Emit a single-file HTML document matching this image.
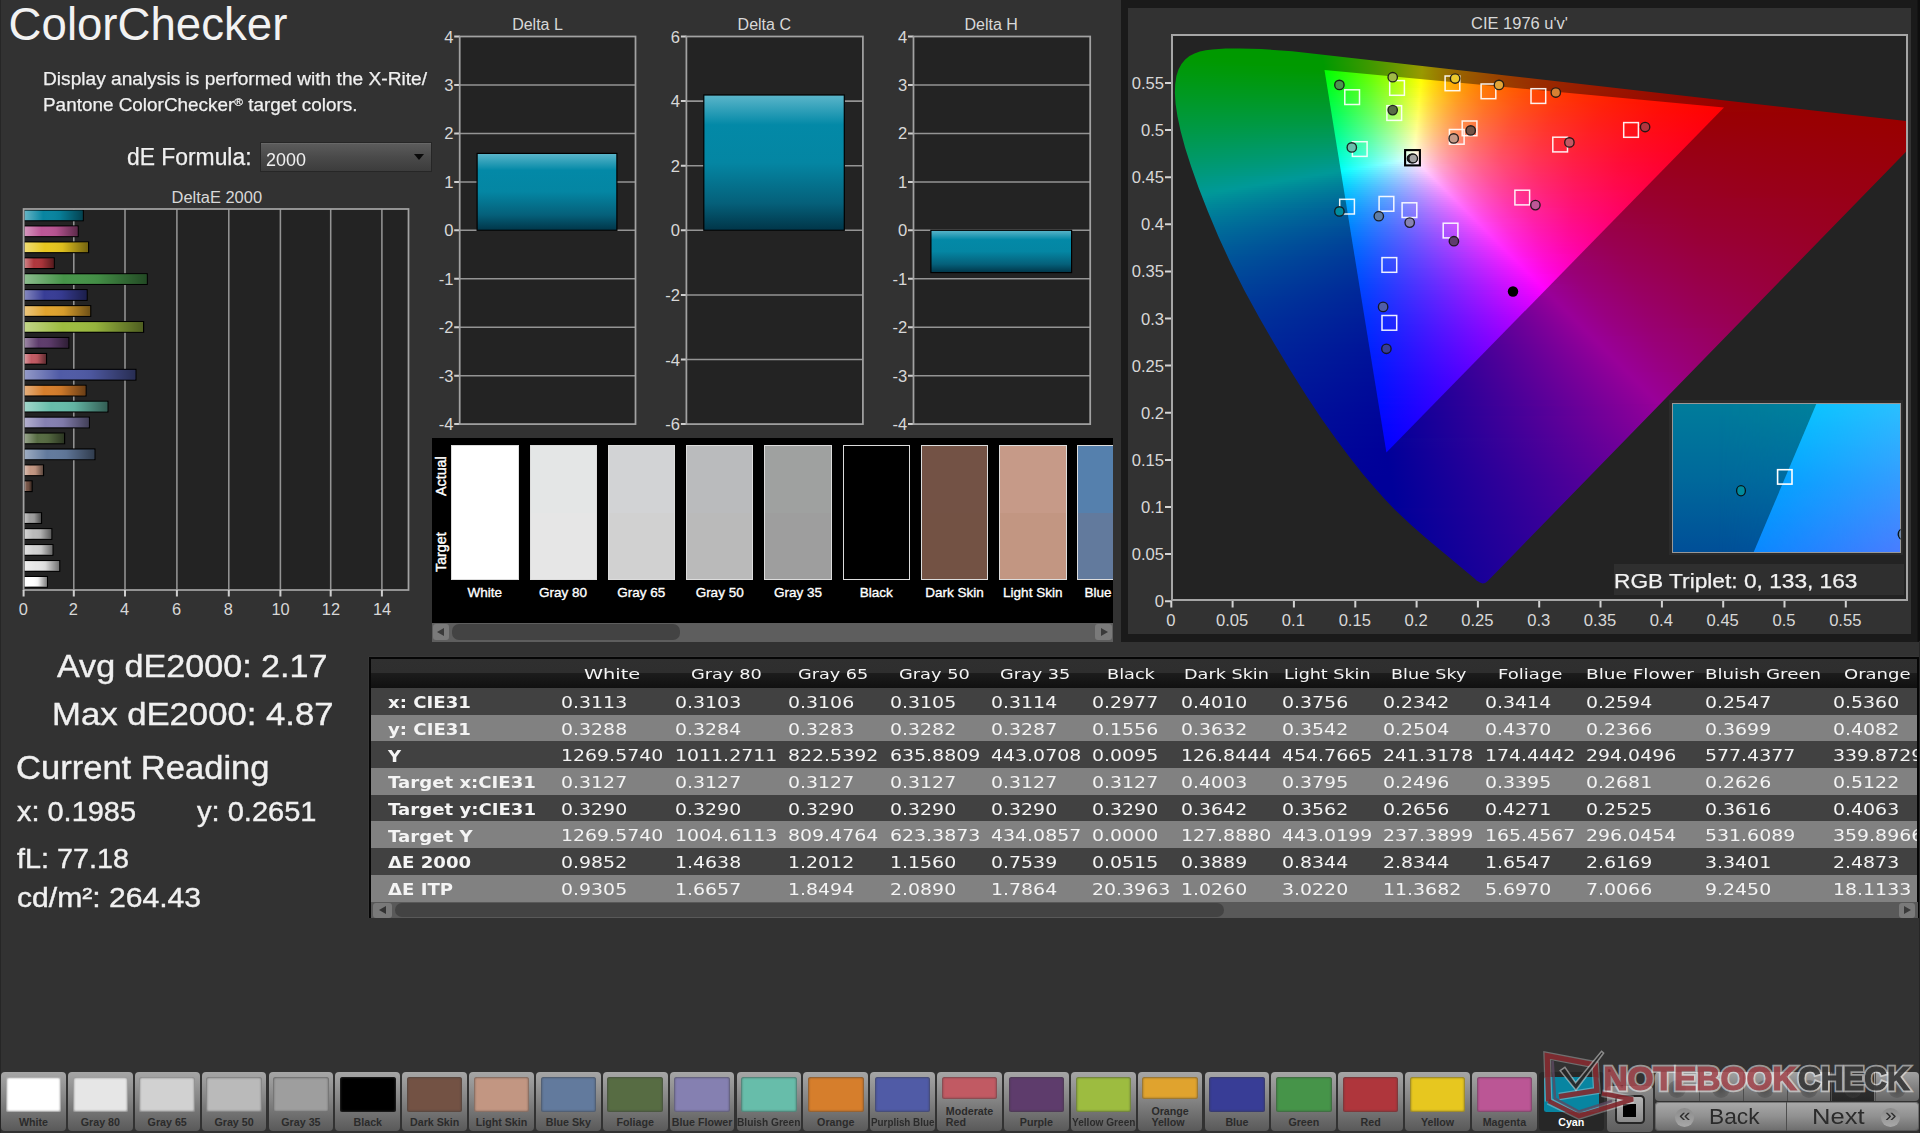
<!DOCTYPE html><html><head><meta charset="utf-8"><title>ColorChecker</title><style>

html,body{margin:0;padding:0;background:#323232;}
body{width:1920px;height:1133px;overflow:hidden;position:relative;font-family:"Liberation Sans",Arial,sans-serif;}
#app{position:absolute;left:0;top:0;width:1920px;height:1133px;overflow:hidden;background:#323232;}
.a{position:absolute;}
.t{position:absolute;white-space:nowrap;transform-origin:0 50%;}
#ov{position:absolute;left:0;top:0;}
.cl{position:absolute;left:0;top:0;width:734px;height:564px;}
.cl i{display:block;height:2px;}
#cie{position:absolute;left:1173.1px;top:36px;width:733.2px;height:563px;overflow:hidden;background:#232323;}
svg text{font-family:"Liberation Sans",Arial,sans-serif;}
.sw{position:absolute;top:445px;width:65.4px;height:133px;border:1px solid #dcdcdc;}
.sw b{display:block;height:67px;}
.sw u{display:block;height:66px;}
.row{position:absolute;left:371px;width:1546px;height:26.7px;overflow:hidden;}
.btn{position:absolute;top:1072px;width:64.8px;height:59px;border-radius:4px;background:linear-gradient(#a6a6a6,#828282 50%,#595959);}
.btn s{position:absolute;left:4.7px;top:4.8px;width:55.5px;height:35.2px;border-radius:2.5px;box-shadow:inset 0 0 2px 1px rgba(60,60,60,.55);}
.bl{position:absolute;white-space:nowrap;transform-origin:50% 50%;text-align:center;font-size:10.5px;line-height:11px;color:#2e2e2e;text-shadow:0 1px 0 rgba(255,255,255,.25);}

</style></head><body><div id="app">
<div class="a" style="left:0;top:0;width:1px;height:1133px;background:#262626"></div>
<span class="t" style="left:8.60px;top:2.40px;font-size:45.60px;line-height:45.60px;color:#f2f2f2;">ColorChecker</span>
<span class="t" style="left:43.30px;top:69.12px;font-size:19.00px;line-height:19.00px;color:#f0f0f0;transform:scaleX(1.0073);-webkit-text-stroke:.25px #f0f0f0;">Display analysis is performed with the X-Rite/</span>
<span class="t" style="left:43.30px;top:95.22px;font-size:19.00px;line-height:19.00px;color:#f0f0f0;transform:scaleX(0.9952);-webkit-text-stroke:.25px #f0f0f0;">Pantone ColorChecker<span style="font-size:.62em;vertical-align:.42em;line-height:0">®</span> target colors.</span>
<span class="t" style="left:127.10px;top:145.93px;font-size:23.00px;line-height:23.00px;color:#f0f0f0;transform:scaleX(0.9939);-webkit-text-stroke:.25px #f0f0f0;">dE Formula:</span>
<div class="a" style="left:260px;top:142px;width:169.5px;height:27.5px;border:1px solid #262626;background:linear-gradient(#5c5c5c,#4a4a4a 50%,#3c3c3c);box-shadow:inset 0 1px 0 rgba(255,255,255,.08)"></div>
<span class="t" style="left:266.00px;top:152.22px;font-size:17.70px;line-height:17.70px;color:#f0f0f0;transform:scaleX(1.0158);">2000</span>
<div class="a" style="left:413.5px;top:153.5px;width:0;height:0;border-left:5.5px solid transparent;border-right:5.5px solid transparent;border-top:6px solid #0a0a0a"></div>
<span class="t" style="left:56.50px;top:651.00px;font-size:31.30px;line-height:31.30px;color:#f0f0f0;transform:scaleX(1.0894);-webkit-text-stroke:.4px #f0f0f0;">Avg dE2000: 2.17</span>
<span class="t" style="left:51.80px;top:698.50px;font-size:31.30px;line-height:31.30px;color:#f0f0f0;transform:scaleX(1.1080);-webkit-text-stroke:.4px #f0f0f0;">Max dE2000: 4.87</span>
<span class="t" style="left:15.50px;top:751.27px;font-size:33.00px;line-height:33.00px;color:#f0f0f0;transform:scaleX(1.0469);-webkit-text-stroke:.4px #f0f0f0;">Current Reading</span>
<span class="t" style="left:16.50px;top:797.50px;font-size:28.00px;line-height:28.00px;color:#f0f0f0;transform:scaleX(1.0330);-webkit-text-stroke:.4px #f0f0f0;">x: 0.1985</span>
<span class="t" style="left:196.50px;top:797.50px;font-size:28.00px;line-height:28.00px;color:#f0f0f0;transform:scaleX(1.0373);-webkit-text-stroke:.4px #f0f0f0;">y: 0.2651</span>
<span class="t" style="left:16.50px;top:844.80px;font-size:28.00px;line-height:28.00px;color:#f0f0f0;transform:scaleX(1.0277);-webkit-text-stroke:.4px #f0f0f0;">fL: 77.18</span>
<span class="t" style="left:16.50px;top:883.90px;font-size:28.00px;line-height:28.00px;color:#f0f0f0;transform:scaleX(1.0748);-webkit-text-stroke:.4px #f0f0f0;">cd/m²: 264.43</span>
<div class="a" style="left:432px;top:438px;width:681px;height:203.5px;background:#000;overflow:hidden">
<div class="sw" style="left:19.2px;top:7.3px"><b style="background:#ffffff"></b><u style="background:#ffffff"></u></div>
<span class="t" style="left:35.55px;top:148.17px;font-size:13.50px;line-height:13.50px;color:#fff;-webkit-text-stroke:.35px #fff;">White</span>
<div class="sw" style="left:97.5px;top:7.3px"><b style="background:#e4e6e6"></b><u style="background:#e6e6e6"></u></div>
<span class="t" style="left:107.07px;top:148.17px;font-size:13.50px;line-height:13.50px;color:#fff;-webkit-text-stroke:.35px #fff;">Gray 80</span>
<div class="sw" style="left:175.8px;top:7.3px"><b style="background:#d2d3d5"></b><u style="background:#d1d1d1"></u></div>
<span class="t" style="left:185.35px;top:148.17px;font-size:13.50px;line-height:13.50px;color:#fff;-webkit-text-stroke:.35px #fff;">Gray 65</span>
<div class="sw" style="left:254.0px;top:7.3px"><b style="background:#babbbd"></b><u style="background:#bababa"></u></div>
<span class="t" style="left:263.63px;top:148.17px;font-size:13.50px;line-height:13.50px;color:#fff;-webkit-text-stroke:.35px #fff;">Gray 50</span>
<div class="sw" style="left:332.3px;top:7.3px"><b style="background:#9fa1a0"></b><u style="background:#9e9e9e"></u></div>
<span class="t" style="left:341.91px;top:148.17px;font-size:13.50px;line-height:13.50px;color:#fff;-webkit-text-stroke:.35px #fff;">Gray 35</span>
<div class="sw" style="left:410.6px;top:7.3px"><b style="background:#000000"></b><u style="background:#000000"></u></div>
<span class="t" style="left:427.69px;top:148.17px;font-size:13.50px;line-height:13.50px;color:#fff;-webkit-text-stroke:.35px #fff;">Black</span>
<div class="sw" style="left:488.9px;top:7.3px"><b style="background:#735245"></b><u style="background:#735244"></u></div>
<span class="t" style="left:493.22px;top:148.17px;font-size:13.50px;line-height:13.50px;color:#fff;-webkit-text-stroke:.35px #fff;">Dark Skin</span>
<div class="sw" style="left:567.2px;top:7.3px"><b style="background:#c69a88"></b><u style="background:#c29682"></u></div>
<span class="t" style="left:571.12px;top:148.17px;font-size:13.50px;line-height:13.50px;color:#fff;-webkit-text-stroke:.35px #fff;">Light Skin</span>
<div class="sw" style="left:645.4px;top:7.3px"><b style="background:#5580ad"></b><u style="background:#627a9d"></u></div>
<span class="t" style="left:652.40px;top:148.17px;font-size:13.50px;line-height:13.50px;color:#fff;-webkit-text-stroke:.35px #fff;">Blue Sky</span>
<span class="t" style="left:3.2px;top:58.4px;font-size:14.3px;line-height:13px;-webkit-text-stroke:.4px #fff;color:#fff;transform-origin:0 0;transform:rotate(-90deg)">Actual</span>
<span class="t" style="left:3.2px;top:133.6px;font-size:14.3px;line-height:13px;-webkit-text-stroke:.4px #fff;color:#fff;transform-origin:0 0;transform:rotate(-90deg)">Target</span>
<div class="a" style="left:0;top:184.5px;width:681px;height:19px;background:#5e5e5e"></div>
<div class="a" style="left:1px;top:186.3px;width:16px;height:15.5px;border-radius:3px;background:#7a7a7a"></div>
<div class="a" style="left:663px;top:186.3px;width:16.5px;height:15.5px;border-radius:3px;background:#7a7a7a"></div>
<div class="a" style="left:5px;top:189.5px;width:0;height:0;border-top:4.5px solid transparent;border-bottom:4.5px solid transparent;border-right:7px solid #3a3a3a"></div>
<div class="a" style="left:668.5px;top:189.5px;width:0;height:0;border-top:4.5px solid transparent;border-bottom:4.5px solid transparent;border-left:7px solid #3a3a3a"></div>
<div class="a" style="left:20.3px;top:186.3px;width:228px;height:15.5px;border-radius:7px;background:#434343"></div>
</div>
<div class="a" style="left:1121px;top:0;width:799px;height:641.5px;background:linear-gradient(90deg,#1a1a1a 796px,#0e0e0e 797px)"></div>
<div class="a" style="left:1128px;top:8px;width:783px;height:626px;background:#323232"></div>
<div class="a" style="left:1171.1px;top:34px;width:733.2px;height:563px;border:2px solid #a6a6a6;background:#232323"></div>
<div id="cie"><div class="cl" style="clip-path:polygon(314.4px 545.2px,312.0px 547.1px,309.6px 547.4px,306.8px 546.4px,303.4px 544.5px,301.4px 542.4px,252.5px 501.8px,238.0px 489.1px,221.5px 473.4px,212.2px 463.8px,201.7px 452.1px,189.7px 438.0px,176.7px 421.5px,162.9px 403.0px,148.3px 382.4px,133.1px 359.5px,117.5px 334.7px,101.7px 308.5px,86.1px 281.6px,71.2px 254.3px,57.6px 227.3px,45.5px 200.9px,34.9px 175.7px,25.7px 152.3px,18.1px 130.8px,12.0px 111.7px,7.5px 95.0px,4.4px 80.4px,2.5px 67.9px,1.8px 57.2px,2.1px 48.0px,3.3px 40.1px,5.4px 33.5px,8.4px 28.0px,12.1px 23.6px,16.4px 20.1px,21.4px 17.4px,26.8px 15.5px,32.8px 14.2px,39.1px 13.4px,52.6px 12.5px,66.5px 12.4px,87.8px 13.0px,119.0px 15.2px,761.5px 88.2px,761.8px 86.1px)">
<i style="margin-top:12px;background:linear-gradient(90deg,#090 32px,#090 104px)"></i>
<i style="background:linear-gradient(90deg,#090 23px,#090 128px)"></i>
<i style="background:linear-gradient(90deg,#090 18px,#090 146px)"></i>
<i style="background:linear-gradient(90deg,#090 14px,#090 149px,#129900 164px)"></i>
<i style="background:linear-gradient(90deg,#090 12px,#090 149px,#289900 181px)"></i>
<i style="background:linear-gradient(90deg,#009902 9px,#090 149px,#1c9900 172px,#429900 199px)"></i>
<i style="background:linear-gradient(90deg,#009904 8px,#090 55px,#090 150px,#2d9900 185px,#5e9900 217px)"></i>
<i style="background:linear-gradient(90deg,#009905 6px,#090 76px,#090 150px,#3a9900 194px,#7b9900 234px)"></i>
<i style="background:linear-gradient(90deg,#009907 5px,#090 97px,#090 151px,#419900 199px,#6b9900 225px,#989900 249px,#999400 252px)"></i>
<i style="background:linear-gradient(90deg,#009909 4px,#090 151px,#239900 178px,#479900 203px,#6f9900 227px,#989900 249px,#997800 269px)"></i>
<i style="background:linear-gradient(90deg,#00990b 3px,#090 151px,#219900 177px,#479900 203px,#6f9900 227px,#990 249px,#997b00 267px,#996200 287px)"></i>
<i style="background:linear-gradient(90deg,#00990d 2px,#009901 151px,#1e9900 175px,#459900 202px,#6d9900 226px,#990 249px,#998300 261px,#997100 274px,#995100 305px)"></i>
<i style="background:linear-gradient(90deg,#00990e 2px,#009903 152px,#229901 178px,#479900 203px,#6e9900 226px,#990 249px,#998000 263px,#996900 280px,#950 300px,#940 322px)"></i>
<i style="background:linear-gradient(90deg,#009910 1px,#009906 152px,#229903 178px,#479900 203px,#6e9900 226px,#989900 248px,#997900 267px,#996100 287px,#994c00 311px,#993900 340px)"></i>
<i style="background:linear-gradient(90deg,#009912 1px,#019908 153px,#239905 179px,#479903 203px,#6e9900 226px,#989900 248px,#997600 269px,#995a00 293px,#994300 322px,#993000 357px)"></i>
<i style="background:linear-gradient(90deg,#009914 0px,#00990a 153px,#239908 179px,#479905 203px,#6e9903 226px,#989900 248px,#997300 271px,#950 299px,#993c00 333px,#992900 375px)"></i>
<i style="background:linear-gradient(90deg,#009915 0px,#00990d 153px,#21990a 178px,#479908 203px,#6e9906 226px,#999903 248px,#998301 260px,#997000 273px,#995000 304px,#993600 343px,#920 393px)"></i>
<i style="background:linear-gradient(90deg,#009917 0px,#01990f 154px,#24990d 180px,#48990b 204px,#6e9908 226px,#999906 248px,#998104 261px,#996d02 275px,#995b00 291px,#994c00 309px,#993100 353px,#991c00 410px)"></i>
<i style="background:linear-gradient(90deg,#009919 0px,#091 154px,#22990f 179px,#46990d 203px,#6e990b 226px,#989909 247px,#997d06 263px,#996a04 277px,#995701 295px,#994700 315px,#992c00 364px,#991700 428px)"></i>
<i style="background:linear-gradient(90deg,#00991b 0px,#009914 154px,#229912 179px,#469910 203px,#6e990e 226px,#98990c 247px,#997d08 263px,#996706 279px,#995403 298px,#994401 319px,#992800 373px,#991300 445px)"></i>
<i style="background:linear-gradient(90deg,#00991d 0px,#009916 154px,#209915 178px,#469913 203px,#6f9911 226px,#98990f 247px,#997d0b 263px,#996608 280px,#995205 300px,#994002 324px,#993100 351px,#992400 383px,#990f00 463px)"></i>
<i style="background:linear-gradient(90deg,#00991f 0px,#009919 155px,#239917 180px,#489916 204px,#6f9914 226px,#999912 247px,#997c0e 263px,#99640a 281px,#994f06 303px,#993d04 328px,#992e01 357px,#992100 392px,#990c00 481px)"></i>
<i style="background:linear-gradient(90deg,#009920 0px,#00991b 155px,#22991a 180px,#489919 204px,#6f9917 226px,#999916 247px,#997a10 264px,#99610c 283px,#994c08 306px,#993a05 333px,#992a02 365px,#991d00 402px,#990900 498px)"></i>
<i style="background:linear-gradient(90deg,#092 0px,#00991e 155px,#1f991d 178px,#46991b 203px,#6d991a 225px,#999919 247px,#997a13 264px,#99600e 284px,#994a0a 308px,#993706 337px,#992703 371px,#991a00 411px,#990600 516px)"></i>
<i style="background:linear-gradient(90deg,#009924 0px,#009920 156px,#22991f 180px,#46991e 203px,#6b991d 224px,#99981c 247px,#997815 265px,#995d10 286px,#99460b 312px,#993407 342px,#992404 378px,#991701 421px,#990300 534px)"></i>
<i style="background:linear-gradient(90deg,#009926 0px,#009923 156px,#219922 180px,#469921 203px,#699921 223px,#99981f 247px,#997718 265px,#995c12 287px,#99450c 314px,#993208 346px,#992204 384px,#991501 430px,#990100 551px)"></i>
<i style="background:linear-gradient(90deg,#009928 0px,#009925 156px,#1e9925 178px,#449924 202px,#689924 222px,#999722 247px,#99751a 266px,#995913 289px,#99420e 317px,#992f09 351px,#991f05 393px,#991102 444px,#990500 513px,#900 569px)"></i>
<i style="background:linear-gradient(90deg,#00992a 0px,#009928 157px,#229928 181px,#479927 204px,#6f9927 226px,#999926 246px,#99751d 266px,#995815 290px,#99400f 319px,#992d0a 355px,#991c05 402px,#990e02 459px,#900 555px,#900 586px)"></i>
<i style="background:linear-gradient(90deg,#00992c 0px,#00992b 157px,#22992b 181px,#47992a 204px,#6e992a 225px,#99992a 246px,#997520 266px,#995717 291px,#993e10 322px,#992a0b 360px,#991906 411px,#990b02 476px,#900 553px,#900 604px)"></i>
<i style="background:linear-gradient(90deg,#00992e 0px,#00992d 157px,#1f992d 179px,#45992d 203px,#6c992d 224px,#99982d 246px,#997322 267px,#995419 293px,#993c12 325px,#99280c 365px,#991606 421px,#990802 493px,#900 551px,#900 622px)"></i>
<i style="background:linear-gradient(90deg,#009930 1px,#009930 158px,#219930 181px,#459930 203px,#6a9931 223px,#999830 246px,#99842a 256px,#997225 267px,#99531b 294px,#993a13 327px,#99260c 369px,#991307 431px,#990502 510px,#990001 550px,#900 639px)"></i>
<i style="background:linear-gradient(90deg,#009932 1px,#093 158px,#219933 181px,#459934 203px,#689934 222px,#999734 246px,#99832d 256px,#997027 268px,#99511c 296px,#993714 331px,#99230d 374px,#991107 441px,#990202 528px,#900 657px)"></i>
<i style="background:linear-gradient(90deg,#009934 1px,#009936 158px,#1f9936 180px,#479937 204px,#6e9937 225px,#999938 245px,#998330 256px,#99702a 268px,#99501e 296px,#993615 332px,#99220e 377px,#990f07 449px,#990002 545px,#900 674px)"></i>
<i style="background:linear-gradient(90deg,#009936 2px,#009939 159px,#229939 182px,#47993a 204px,#6e993b 225px,#99993c 245px,#998333 256px,#996f2c 268px,#995e26 282px,#994e20 298px,#993416 335px,#99200f 382px,#990e08 452px,#990003 543px,#900 692px)"></i>
<i style="background:linear-gradient(90deg,#009938 2px,#00993c 159px,#22993c 182px,#47993d 204px,#6c993e 224px,#99983f 245px,#998236 256px,#996d2e 269px,#994d22 299px,#993318 337px,#991e10 386px,#990d09 453px,#990004 541px,#900 710px)"></i>
<i style="background:linear-gradient(90deg,#00993a 2px,#00993e 159px,#1e993f 180px,#459941 203px,#6b9942 223px,#999843 245px,#99823a 256px,#996d31 269px,#995b2a 284px,#994b23 300px,#993119 339px,#991d10 390px,#990d0a 455px,#990005 539px,#900 727px)"></i>
<i style="background:linear-gradient(90deg,#00993c 3px,#009941 160px,#239943 183px,#469944 204px,#699945 222px,#999746 245px,#99813d 256px,#996d34 269px,#995a2c 284px,#994b25 300px,#99301a 340px,#991c11 392px,#990c0b 456px,#990006 538px,#900 734px)"></i>
<i style="background:linear-gradient(90deg,#00993e 3px,#094 160px,#219946 182px,#459947 203px,#99974a 245px,#998140 256px,#996c37 269px,#995a2e 284px,#994a28 300px,#99301c 340px,#991b13 392px,#990c0c 455px,#990006 536px,#900 734px)"></i>
<i style="background:linear-gradient(90deg,#009940 4px,#009947 160px,#219949 182px,#46994b 204px,#6d994d 224px,#99994f 244px,#998244 255px,#996d3a 268px,#995a31 283px,#994b2a 299px,#99301e 339px,#991c14 390px,#990c0d 453px,#990007 534px,#900 734px)"></i>
<i style="background:linear-gradient(90deg,#009942 4px,#01994a 161px,#24994c 184px,#48994e 205px,#6d9950 224px,#999852 244px,#998247 255px,#996d3d 268px,#995a34 283px,#994a2c 299px,#99301f 339px,#991b15 390px,#990c0e 453px,#990008 532px,#990001 734px)"></i>
<i style="background:linear-gradient(90deg,#094 4px,#00994e 161px,#229950 183px,#469952 204px,#6b9954 223px,#999856 244px,#99814a 255px,#996c40 268px,#995936 283px,#994a2e 299px,#992f21 339px,#991b17 390px,#990c0f 452px,#990009 530px,#990001 734px)"></i>
<i style="background:linear-gradient(90deg,#009946 5px,#009951 161px,#209953 182px,#495 203px,#699957 222px,#99985a 244px,#99814e 255px,#996c43 268px,#995939 283px,#994931 299px,#992f23 339px,#991b18 390px,#990c10 451px,#99000a 528px,#990002 734px)"></i>
<i style="background:linear-gradient(90deg,#009948 5px,#019954 162px,#239956 184px,#469959 204px,#99975e 244px,#998051 255px,#996b46 268px,#99583b 283px,#994933 299px,#992f24 339px,#991a19 390px,#990c11 450px,#99000b 526px,#990002 734px)"></i>
<i style="background:linear-gradient(90deg,#00994b 6px,#009957 162px,#22995a 184px,#48995d 205px,#709960 225px,#999963 243px,#998155 254px,#996c49 267px,#995a3f 281px,#994a36 297px,#992f27 337px,#991b1b 388px,#990c12 448px,#99000c 524px,#990003 734px)"></i>
<i style="background:linear-gradient(90deg,#00994d 6px,#00995a 162px,#20995d 183px,#469960 204px,#6c9963 223px,#999967 243px,#998159 254px,#996c4c 267px,#995a42 281px,#994a38 297px,#992f28 337px,#991a1c 388px,#990c14 447px,#99000d 522px,#990003 734px)"></i>
<i style="background:linear-gradient(90deg,#00994f 7px,#01995e 163px,#239961 185px,#479964 205px,#6c9967 223px,#99986b 243px,#99815c 254px,#996b4f 267px,#995944 281px,#99493a 297px,#992e2a 337px,#991a1d 388px,#990c15 446px,#99000e 520px,#990004 734px)"></i>
<i style="background:linear-gradient(90deg,#009951 7px,#009961 163px,#219964 184px,#459968 204px,#6a996b 222px,#99986f 243px,#998060 254px,#996b52 267px,#995947 281px,#99493d 297px,#992e2c 337px,#991a1f 388px,#990b16 446px,#99000f 518px,#990004 734px)"></i>
<i style="background:linear-gradient(90deg,#009954 8px,#009964 163px,#1f9967 183px,#43996b 203px,#68996f 221px,#999773 243px,#998063 254px,#996a55 267px,#995849 281px,#99483f 297px,#992e2d 337px,#991920 388px,#990b17 445px,#990010 516px,#990005 734px)"></i>
<i style="background:linear-gradient(90deg,#009956 9px,#009968 163px,#1c996b 181px,#41996f 202px,#6c9973 223px,#999978 242px,#999777 243px,#997f67 254px,#996a58 267px,#99584c 281px,#994841 297px,#992d2f 337px,#991921 388px,#990b18 444px,#901 514px,#990005 734px)"></i>
<i style="background:linear-gradient(90deg,#009958 9px,#00996b 164px,#22996f 185px,#479973 205px,#6f9978 224px,#99997d 242px,#99806c 253px,#996c5d 265px,#995950 279px,#994844 296px,#992e32 335px,#991923 386px,#990b19 442px,#990012 512px,#990006 734px)"></i>
<i style="background:linear-gradient(90deg,#00995b 10px,#00996f 164px,#209973 184px,#459977 204px,#6a997c 222px,#999881 242px,#99806f 253px,#996b60 265px,#995953 279px,#994847 296px,#992d33 335px,#991925 386px,#990b1b 441px,#990013 510px,#990006 734px)"></i>
<i style="background:linear-gradient(90deg,#00995d 10px,#009972 164px,#1e9976 183px,#45997b 204px,#6a9980 222px,#999885 242px,#997f73 253px,#996b63 265px,#995856 279px,#994749 296px,#992d35 335px,#991826 386px,#990b1c 440px,#990014 508px,#990007 734px)"></i>
<i style="background:linear-gradient(90deg,#009960 11px,#00996a 95px,#009976 165px,#21997a 185px,#45997f 204px,#689984 221px,#999789 242px,#997f76 253px,#996a67 265px,#995858 279px,#99484c 295px,#992c37 335px,#991827 386px,#990b1d 440px,#990015 506px,#990007 734px)"></i>
<i style="background:linear-gradient(90deg,#009962 11px,#00996d 95px,#009979 165px,#1f997e 184px,#459983 204px,#6d9989 223px,#99998f 241px,#99978d 242px,#997e7a 253px,#996a6a 265px,#99575b 279px,#99474e 295px,#992d39 334px,#991829 386px,#990b1e 439px,#990016 504px,#990008 733px)"></i>
<i style="background:linear-gradient(90deg,#009964 12px,#009970 96px,#00997d 165px,#1f9982 184px,#469988 205px,#6d998d 223px,#999994 241px,#99807f 252px,#996b6e 264px,#99585f 278px,#994851 294px,#992d3b 333px,#99182a 384px,#990b20 437px,#990017 502px,#990008 731px)"></i>
<i style="background:linear-gradient(90deg,#009967 13px,#009973 97px,#009981 166px,#229986 186px,#46998c 205px,#6d9992 223px,#999898 241px,#997f83 252px,#996a72 264px,#995862 278px,#994754 294px,#992c3d 333px,#99182c 383px,#990b21 436px,#990018 501px,#990009 729px)"></i>
<i style="background:linear-gradient(90deg,#009969 13px,#009976 97px,#009985 166px,#3e998f 201px,#7c9999 229px,#999398 243px,#997b84 254px,#996772 266px,#995563 280px,#994555 296px,#992b3e 335px,#99172d 386px,#990a22 437px,#990019 499px,#990010 598px,#990009 727px)"></i>
<i style="background:linear-gradient(90deg,#00996c 14px,#009979 97px,#098 166px,#2b9990 191px,#609999 217px,#998d98 245px,#997784 256px,#996373 268px,#995263 282px,#994255 299px,#99293f 338px,#99152d 389px,#990a23 438px,#99001a 497px,#901 596px,#99000a 725px)"></i>
<i style="background:linear-gradient(90deg,#00996f 15px,#00997c 98px,#00998d 167px,#239993 187px,#469999 205px,#998898 247px,#997384 258px,#995f72 271px,#994056 301px,#99273f 341px,#99142e 392px,#99001b 495px,#990012 594px,#99000b 723px)"></i>
<i style="background:linear-gradient(90deg,#009971 15px,#00997f 98px,#009990 167px,#2e9999 193px,#998398 249px,#996f85 260px,#995c73 273px,#993d56 304px,#99253f 344px,#99132e 395px,#99001c 493px,#990013 592px,#99000b 722px)"></i>
<i style="background:linear-gradient(90deg,#009974 16px,#009983 99px,#009994 167px,#179999 181px,#548d99 215px,#997f98 251px,#996b85 262px,#995973 275px,#993b57 306px,#992440 346px,#99122f 397px,#99001d 491px,#990013 590px,#99000c 720px)"></i>
<i style="background:linear-gradient(90deg,#097 17px,#009986 100px,#099 168px,#498b99 210px,#997a98 253px,#996786 264px,#995674 277px,#993957 308px,#992241 348px,#991130 400px,#99001f 489px,#990014 588px,#99000c 718px)"></i>
<i style="background:linear-gradient(90deg,#009979 17px,#098 93px,#099 157px,#009599 168px,#478799 210px,#997699 255px,#996284 267px,#995273 280px,#993658 311px,#992141 351px,#991030 403px,#990020 487px,#990015 586px,#99000d 716px)"></i>
<i style="background:linear-gradient(90deg,#00997c 18px,#009989 86px,#099 145px,#009299 168px,#458399 210px,#997299 257px,#995f85 269px,#994f74 282px,#993458 313px,#991f42 354px,#990f31 406px,#990021 485px,#990016 584px,#99000e 714px)"></i>
<i style="background:linear-gradient(90deg,#00997f 19px,#099 133px,#008e99 169px,#487f99 213px,#996e99 259px,#995b85 271px,#994c75 284px,#993258 316px,#991e43 356px,#990e31 408px,#902 483px,#990017 582px,#99000e 712px)"></i>
<i style="background:linear-gradient(90deg,#009982 20px,#099 121px,#008a99 169px,#487b99 214px,#996a99 261px,#995885 273px,#994a75 286px,#993059 318px,#991c43 359px,#990d32 411px,#990024 481px,#990018 580px,#99000f 710px)"></i>
<i style="background:linear-gradient(90deg,#009984 20px,#099 109px,#008799 169px,#467899 214px,#969 263px,#994978 286px,#99325e 314px,#992049 350px,#991138 394px,#990025 479px,#990019 578px,#990010 708px)"></i>
<i style="background:linear-gradient(90deg,#009987 21px,#099 97px,#008399 170px,#497499 217px,#996299 265px,#994778 288px,#99305e 317px,#991e49 352px,#991039 396px,#990026 477px,#99001a 576px,#990010 706px)"></i>
<i style="background:linear-gradient(90deg,#00998a 22px,#099 85px,#008099 170px,#497099 218px,#995f99 267px,#994479 290px,#992e5f 319px,#991d4a 354px,#990f39 398px,#990027 475px,#99001b 574px,#901 704px)"></i>
<i style="background:linear-gradient(90deg,#00998d 22px,#099 73px,#007d99 170px,#456e99 217px,#995b99 269px,#994279 292px,#992d5f 321px,#991c4b 356px,#990e3a 399px,#990029 473px,#99001c 571px,#901 702px)"></i>
<i style="background:linear-gradient(90deg,#009990 23px,#099 61px,#007a99 171px,#4a6a99 221px,#995899 271px,#993f7a 294px,#992b60 323px,#991b4c 358px,#990d3b 401px,#99002a 471px,#99001c 569px,#990012 700px)"></i>
<i style="background:linear-gradient(90deg,#009993 24px,#099 49px,#079 171px,#496799 222px,#959 273px,#993d7a 296px,#992961 325px,#991a4c 360px,#990d3c 403px,#99002c 469px,#99001d 567px,#990013 698px)"></i>
<i style="background:linear-gradient(90deg,#009996 25px,#009699 48px,#007499 171px,#466499 221px,#995299 275px,#993b7b 298px,#992861 327px,#99184d 362px,#990c3c 405px,#99002d 467px,#99001e 565px,#990013 696px)"></i>
<i style="background:linear-gradient(90deg,#099 25px,#007199 172px,#4a6199 225px,#994f99 277px,#99397b 300px,#992662 329px,#99174e 364px,#990b3d 406px,#99002e 466px,#99001f 564px,#990014 694px)"></i>
<i style="background:linear-gradient(90deg,#009699 26px,#006f99 172px,#4a5e99 226px,#994c99 279px,#99377b 302px,#992562 331px,#99164e 366px,#990a3e 408px,#990030 464px,#990020 562px,#990015 692px)"></i>
<i style="background:linear-gradient(90deg,#009399 27px,#006c99 172px,#475c99 225px,#994999 281px,#99357c 304px,#992363 333px,#99154f 368px,#990a3f 410px,#990031 461px,#990026 523px,#990016 690px)"></i>
<i style="background:linear-gradient(90deg,#009099 28px,#016a99 173px,#4a5999 228px,#994799 283px,#99337c 306px,#992264 335px,#991450 369px,#990940 411px,#903 459px,#990027 523px,#990016 688px)"></i>
<i style="background:linear-gradient(90deg,#008d99 29px,#006799 173px,#495699 229px,#949 285px,#99307c 309px,#992064 337px,#991351 371px,#990840 413px,#990034 458px,#990028 524px,#990017 686px)"></i>
<i style="background:linear-gradient(90deg,#008a99 29px,#006599 173px,#485499 229px,#994199 287px,#992e7c 311px,#991f65 339px,#991251 373px,#990741 415px,#990036 456px,#990028 525px,#990018 685px)"></i>
<i style="background:linear-gradient(90deg,#089 30px,#016399 174px,#4a5199 232px,#993f99 289px,#992d7c 313px,#991e65 341px,#991152 375px,#990742 416px,#990037 454px,#990029 525px,#990018 683px)"></i>
<i style="background:linear-gradient(90deg,#008599 31px,#006099 174px,#4a4f99 233px,#993d99 291px,#992b7d 315px,#991c66 343px,#991052 377px,#990642 418px,#990039 452px,#99002a 526px,#990019 681px)"></i>
<i style="background:linear-gradient(90deg,#008299 32px,#005e99 174px,#494d99 233px,#993a99 293px,#99297d 317px,#991b66 345px,#990f53 379px,#990643 419px,#99003a 450px,#99002b 526px,#99001a 679px)"></i>
<i style="background:linear-gradient(90deg,#008099 32px,#015c99 175px,#4b4a99 236px,#993899 295px,#99277d 319px,#991a67 347px,#990e54 381px,#990544 421px,#99003c 448px,#99002c 526px,#99001b 677px)"></i>
<i style="background:linear-gradient(90deg,#007e99 33px,#005a99 175px,#4b4899 237px,#993699 297px,#99267e 321px,#991967 349px,#990e55 382px,#990445 422px,#99003e 446px,#99002c 526px,#99001b 675px)"></i>
<i style="background:linear-gradient(90deg,#007b99 34px,#005899 175px,#494799 237px,#993499 299px,#99257f 322px,#991868 350px,#990d56 383px,#990446 423px,#99003f 444px,#99002d 526px,#99001c 673px)"></i>
<i style="background:linear-gradient(90deg,#007999 35px,#015699 176px,#4a4499 239px,#993299 301px,#99237f 324px,#991669 352px,#990c56 385px,#990346 425px,#990041 442px,#99002e 527px,#99001d 671px)"></i>
<i style="background:linear-gradient(90deg,#079 36px,#005499 176px,#4a4399 240px,#993099 303px,#99217f 326px,#991569 354px,#990b57 387px,#990247 426px,#990043 440px,#99002f 527px,#99001e 669px)"></i>
<i style="background:linear-gradient(90deg,#007499 37px,#005399 176px,#4a4199 241px,#992e99 305px,#992080 328px,#99146a 356px,#990a57 389px,#990248 428px,#99003b 474px,#990030 528px,#99001e 667px)"></i>
<i style="background:linear-gradient(90deg,#007299 38px,#015199 177px,#4b3f99 243px,#992c99 307px,#991e80 330px,#99136a 358px,#990958 391px,#990149 429px,#990030 528px,#99001f 665px)"></i>
<i style="background:linear-gradient(90deg,#007099 38px,#004f99 177px,#4b3d99 244px,#992a99 309px,#991d80 332px,#99126b 360px,#990959 392px,#990149 430px,#990031 528px,#990020 663px)"></i>
<i style="background:linear-gradient(90deg,#006e99 39px,#004d99 177px,#493b99 244px,#992899 311px,#991c81 334px,#99116b 362px,#990859 394px,#99004a 432px,#990032 528px,#990021 661px)"></i>
<i style="background:linear-gradient(90deg,#006c99 40px,#004c99 177px,#483a99 244px,#992699 313px,#991a81 336px,#99106c 364px,#99075a 396px,#99004b 433px,#903 528px,#990021 659px)"></i>
<i style="background:linear-gradient(90deg,#006a99 41px,#004a99 178px,#4b3899 248px,#992499 315px,#991981 338px,#990f6d 365px,#99065b 397px,#99004c 434px,#990034 528px,#902 657px)"></i>
<i style="background:linear-gradient(90deg,#006899 42px,#004999 178px,#4a3699 248px,#992399 317px,#991781 340px,#990e6d 367px,#99065c 398px,#99004d 435px,#990035 528px,#990023 655px)"></i>
<i style="background:linear-gradient(90deg,#069 43px,#004799 178px,#493599 248px,#992199 319px,#991682 342px,#990d6d 369px,#99055c 400px,#99004d 437px,#990035 529px,#990024 653px)"></i>
<i style="background:linear-gradient(90deg,#006599 43px,#004599 179px,#4b3399 251px,#991f99 321px,#991582 344px,#990c6e 371px,#990054 422px,#99004e 438px,#990036 529px,#990025 651px)"></i>
<i style="background:linear-gradient(90deg,#006399 44px,#049 179px,#4a3199 252px,#991e99 323px,#991482 346px,#990b6e 373px,#990056 420px,#99004f 439px,#990037 529px,#990026 649px)"></i>
<i style="background:linear-gradient(90deg,#006199 45px,#004399 179px,#483199 251px,#991c99 325px,#991282 348px,#990a6f 374px,#990058 418px,#990050 440px,#990038 528px,#990026 647px)"></i>
<i style="background:linear-gradient(90deg,#005f99 46px,#004199 180px,#4b2e99 255px,#991b99 327px,#991183 350px,#990970 376px,#99005a 416px,#990050 442px,#990039 529px,#990027 646px)"></i>
<i style="background:linear-gradient(90deg,#005d99 47px,#004099 180px,#4b2d99 256px,#991999 329px,#991083 352px,#990870 378px,#99005d 414px,#990051 443px,#99003a 529px,#990028 644px)"></i>
<i style="background:linear-gradient(90deg,#005c99 48px,#003f99 180px,#492c99 255px,#991899 331px,#990f83 354px,#990770 380px,#99005f 412px,#990052 444px,#99003b 529px,#990029 642px)"></i>
<i style="background:linear-gradient(90deg,#005a99 49px,#003d99 181px,#4b2a99 259px,#991699 333px,#990e84 355px,#990771 381px,#990061 410px,#990053 445px,#99003b 529px,#99002a 640px)"></i>
<i style="background:linear-gradient(90deg,#005999 50px,#003c99 181px,#4a2999 259px,#991599 335px,#990d83 358px,#990672 383px,#990063 409px,#990053 446px,#99003c 529px,#99002b 638px)"></i>
<i style="background:linear-gradient(90deg,#005799 51px,#003b99 181px,#492899 259px,#991499 337px,#990c84 360px,#990572 385px,#990065 407px,#990054 447px,#99003d 529px,#99002c 636px)"></i>
<i style="background:linear-gradient(90deg,#059 52px,#003999 182px,#4b2699 262px,#991299 339px,#990a84 362px,#990472 387px,#990068 405px,#905 449px,#99003e 529px,#99002d 634px)"></i>
<i style="background:linear-gradient(90deg,#005499 53px,#003899 182px,#4b2599 263px,#919 341px,#990984 364px,#990373 389px,#99006a 403px,#905 450px,#99003f 529px,#99002d 632px)"></i>
<i style="background:linear-gradient(90deg,#005299 54px,#003799 182px,#492499 262px,#991099 343px,#990985 365px,#990273 390px,#990056 451px,#990040 529px,#99002e 630px)"></i>
<i style="background:linear-gradient(90deg,#005199 54px,#003699 183px,#4b2399 266px,#990f99 345px,#990885 367px,#990174 392px,#990057 452px,#990041 529px,#99002f 628px)"></i>
<i style="background:linear-gradient(90deg,#005099 55px,#003599 183px,#4b2199 267px,#990d99 347px,#990785 369px,#990174 394px,#990058 453px,#990042 529px,#990030 626px)"></i>
<i style="background:linear-gradient(90deg,#004e99 56px,#003499 183px,#492199 266px,#990c99 349px,#990686 371px,#990075 395px,#990059 454px,#990042 529px,#990031 624px)"></i>
<i style="background:linear-gradient(90deg,#004d99 57px,#039 184px,#4b1f99 269px,#990b99 351px,#990586 373px,#990075 397px,#990059 455px,#990043 529px,#990032 622px)"></i>
<i style="background:linear-gradient(90deg,#004b99 58px,#003299 184px,#4b1e99 270px,#990a99 353px,#990486 375px,#990076 399px,#99005a 456px,#904 528px,#903 620px)"></i>
<i style="background:linear-gradient(90deg,#004a99 59px,#003199 184px,#4a1d99 270px,#990999 355px,#99007d 389px,#990076 400px,#99005b 457px,#990045 528px,#990034 618px)"></i>
<i style="background:linear-gradient(90deg,#004999 60px,#003099 185px,#4b1c99 273px,#990899 357px,#990080 387px,#907 402px,#99005c 458px,#990046 528px,#990035 616px)"></i>
<i style="background:linear-gradient(90deg,#004799 61px,#002f99 185px,#4b1b99 274px,#990799 359px,#990084 385px,#990078 403px,#99005d 458px,#990047 527px,#990036 614px)"></i>
<i style="background:linear-gradient(90deg,#004699 62px,#002e99 185px,#4a1a99 274px,#990699 361px,#990087 383px,#990078 405px,#99005e 459px,#990048 527px,#990037 612px)"></i>
<i style="background:linear-gradient(90deg,#004599 63px,#002d99 186px,#4b1999 276px,#990599 363px,#99008a 381px,#990078 407px,#99005e 460px,#990049 527px,#990038 610px)"></i>
<i style="background:linear-gradient(90deg,#049 65px,#002c99 186px,#4b1899 277px,#990399 365px,#99008d 379px,#990079 408px,#99005f 461px,#99004a 527px,#990039 609px)"></i>
<i style="background:linear-gradient(90deg,#004299 66px,#002b99 186px,#4a1799 277px,#990299 367px,#990079 410px,#990060 462px,#99004b 527px,#99003a 607px)"></i>
<i style="background:linear-gradient(90deg,#004199 67px,#002a99 187px,#4b1699 280px,#990299 369px,#99007a 411px,#990061 463px,#99004c 527px,#99003b 605px)"></i>
<i style="background:linear-gradient(90deg,#004099 68px,#002999 187px,#4b1599 281px,#990199 371px,#99007a 413px,#990061 464px,#99004d 526px,#99003c 603px)"></i>
<i style="background:linear-gradient(90deg,#003f99 69px,#002899 187px,#4a1599 281px,#909 373px,#99007a 415px,#990062 465px,#99004e 526px,#99003d 601px)"></i>
<i style="background:linear-gradient(90deg,#003e99 70px,#002799 188px,#4b1399 283px,#909 375px,#99007b 416px,#990063 466px,#99004f 526px,#99003f 599px)"></i>
<i style="background:linear-gradient(90deg,#003d99 71px,#002699 188px,#4a1399 284px,#909 377px,#99007c 418px,#990064 466px,#990050 525px,#990040 597px)"></i>
<i style="background:linear-gradient(90deg,#003b99 72px,#002699 188px,#4a1299 285px,#8d0099 365px,#909 379px,#99007c 419px,#990065 467px,#990051 525px,#990041 595px)"></i>
<i style="background:linear-gradient(90deg,#003a99 73px,#002599 189px,#441399 278px,#890099 363px,#909 381px,#99007d 421px,#990065 468px,#990052 525px,#990042 593px)"></i>
<i style="background:linear-gradient(90deg,#003999 74px,#002499 189px,#421299 277px,#860099 361px,#909 383px,#99007d 423px,#906 469px,#990053 525px,#990043 591px)"></i>
<i style="background:linear-gradient(90deg,#003899 75px,#002399 189px,#401299 275px,#830099 359px,#909 385px,#99007e 424px,#990067 469px,#990054 524px,#904 589px)"></i>
<i style="background:linear-gradient(90deg,#003799 76px,#029 190px,#3f1299 275px,#800099 357px,#909 387px,#99007e 425px,#990068 470px,#905 523px,#990045 587px)"></i>
<i style="background:linear-gradient(90deg,#003699 77px,#029 190px,#3e1199 274px,#7d0099 355px,#909 389px,#99007f 427px,#990069 471px,#990056 523px,#990047 585px)"></i>
<i style="background:linear-gradient(90deg,#003599 78px,#002199 190px,#3b1199 272px,#7a0099 353px,#909 391px,#99007f 428px,#99006a 471px,#990057 522px,#990048 583px)"></i>
<i style="background:linear-gradient(90deg,#003499 79px,#002099 191px,#780099 352px,#909 393px,#990080 430px,#99006b 472px,#990058 522px,#990049 581px)"></i>
<i style="background:linear-gradient(90deg,#039 81px,#002099 191px,#750099 350px,#909 395px,#990080 431px,#99006b 473px,#990059 522px,#99004a 579px)"></i>
<i style="background:linear-gradient(90deg,#003299 82px,#001f99 191px,#720099 348px,#909 397px,#990080 433px,#99006c 473px,#99005b 521px,#99004c 577px)"></i>
<i style="background:linear-gradient(90deg,#003199 83px,#001e99 192px,#6f0099 346px,#909 399px,#990081 434px,#99006d 474px,#99005c 521px,#99004d 575px)"></i>
<i style="background:linear-gradient(90deg,#003099 84px,#001d99 192px,#6d0099 344px,#909 401px,#990081 436px,#99006e 475px,#99005d 520px,#99004e 573px)"></i>
<i style="background:linear-gradient(90deg,#002f99 85px,#001d99 192px,#6a0099 342px,#909 403px,#990082 437px,#99006f 475px,#99005e 520px,#99004f 571px)"></i>
<i style="background:linear-gradient(90deg,#002f99 86px,#001c99 193px,#670099 340px,#909 405px,#990082 439px,#990070 476px,#99005f 520px,#990050 570px)"></i>
<i style="background:linear-gradient(90deg,#002e99 87px,#001b99 193px,#650099 338px,#909 407px,#990083 440px,#990070 477px,#990060 519px,#990052 568px)"></i>
<i style="background:linear-gradient(90deg,#002d99 89px,#001b99 193px,#620099 336px,#909 409px,#990083 442px,#990071 477px,#990061 518px,#990053 566px)"></i>
<i style="background:linear-gradient(90deg,#002c99 90px,#001a99 194px,#600099 334px,#909 411px,#990084 443px,#990072 478px,#905 564px)"></i>
<i style="background:linear-gradient(90deg,#002b99 91px,#001a99 194px,#5d0099 332px,#909 413px,#990085 444px,#990073 478px,#990056 562px)"></i>
<i style="background:linear-gradient(90deg,#002a99 92px,#001999 194px,#5b0099 330px,#909 415px,#990085 446px,#990074 479px,#990057 560px)"></i>
<i style="background:linear-gradient(90deg,#002999 93px,#001899 195px,#590099 328px,#909 417px,#990085 448px,#990075 480px,#990059 558px)"></i>
<i style="background:linear-gradient(90deg,#002999 94px,#001899 195px,#560099 326px,#909 419px,#990076 480px,#99005a 556px)"></i>
<i style="background:linear-gradient(90deg,#002899 95px,#001799 195px,#540099 324px,#909 421px,#990076 481px,#99005c 554px)"></i>
<i style="background:linear-gradient(90deg,#002799 97px,#001799 196px,#520099 322px,#909 423px,#907 481px,#99005d 552px)"></i>
<i style="background:linear-gradient(90deg,#002699 98px,#001699 196px,#500099 320px,#909 425px,#990079 481px,#99005f 550px)"></i>
<i style="background:linear-gradient(90deg,#002599 99px,#001599 196px,#4d0099 318px,#909 427px,#990079 482px,#990060 548px)"></i>
<i style="background:linear-gradient(90deg,#002599 100px,#001599 196px,#4c0099 317px,#909 429px,#99007a 482px,#990062 546px)"></i>
<i style="background:linear-gradient(90deg,#002499 101px,#001499 197px,#4a0099 315px,#909 431px,#99007b 483px,#990063 544px)"></i>
<i style="background:linear-gradient(90deg,#002399 103px,#001499 197px,#480099 313px,#909 433px,#99007c 483px,#990065 542px)"></i>
<i style="background:linear-gradient(90deg,#029 104px,#001399 197px,#460099 311px,#909 435px,#99007d 484px,#906 540px)"></i>
<i style="background:linear-gradient(90deg,#002199 105px,#001399 198px,#409 309px,#909 437px,#99007e 484px,#990068 538px)"></i>
<i style="background:linear-gradient(90deg,#002199 106px,#001299 198px,#420099 307px,#909 439px,#99007f 484px,#99006a 536px)"></i>
<i style="background:linear-gradient(90deg,#002099 107px,#001299 198px,#400099 305px,#909 441px,#990080 485px,#99006b 534px)"></i>
<i style="background:linear-gradient(90deg,#001f99 109px,#019 199px,#3e0099 303px,#909 443px,#990081 485px,#99006d 532px)"></i>
<i style="background:linear-gradient(90deg,#001f99 110px,#019 199px,#3c0099 301px,#909 445px,#990082 486px,#99006e 531px)"></i>
<i style="background:linear-gradient(90deg,#001e99 111px,#001099 199px,#3a0099 299px,#909 447px,#990083 486px,#990070 529px)"></i>
<i style="background:linear-gradient(90deg,#001d99 112px,#001099 200px,#390099 297px,#909 449px,#990083 487px,#990072 527px)"></i>
<i style="background:linear-gradient(90deg,#001d99 113px,#000f99 200px,#370099 295px,#909 451px,#990084 487px,#990073 525px)"></i>
<i style="background:linear-gradient(90deg,#001c99 115px,#000f99 200px,#350099 293px,#909 453px,#990086 487px,#990075 523px)"></i>
<i style="background:linear-gradient(90deg,#001b99 116px,#000e99 201px,#309 291px,#909 455px,#907 521px)"></i>
<i style="background:linear-gradient(90deg,#001b99 117px,#000e99 201px,#320099 289px,#909 457px,#990079 519px)"></i>
<i style="background:linear-gradient(90deg,#001a99 118px,#000e99 201px,#300099 287px,#909 459px,#99007b 517px)"></i>
<i style="background:linear-gradient(90deg,#001999 120px,#000d99 202px,#2e0099 285px,#909 461px,#99007d 515px)"></i>
<i style="background:linear-gradient(90deg,#001999 121px,#000d99 202px,#2d0099 283px,#909 463px,#99007f 513px)"></i>
<i style="background:linear-gradient(90deg,#001899 122px,#000c99 202px,#2b0099 281px,#909 465px,#990081 511px)"></i>
<i style="background:linear-gradient(90deg,#001799 123px,#000c99 203px,#2a0099 280px,#909 467px,#990083 509px)"></i>
<i style="background:linear-gradient(90deg,#001799 125px,#000b99 203px,#290099 278px,#909 469px,#990085 507px)"></i>
<i style="background:linear-gradient(90deg,#001699 126px,#000b99 203px,#270099 276px,#909 471px,#990087 505px)"></i>
<i style="background:linear-gradient(90deg,#001699 127px,#000a99 204px,#260099 274px,#909 473px,#990089 503px)"></i>
<i style="background:linear-gradient(90deg,#001599 128px,#000a99 204px,#240099 272px,#909 475px,#99008b 501px)"></i>
<i style="background:linear-gradient(90deg,#001499 130px,#000a99 204px,#230099 270px,#909 477px,#99008d 499px)"></i>
<i style="background:linear-gradient(90deg,#001499 131px,#000999 205px,#210099 268px,#909 479px,#99008f 497px)"></i>
<i style="background:linear-gradient(90deg,#001399 132px,#000999 205px,#200099 266px,#909 481px,#990091 495px)"></i>
<i style="background:linear-gradient(90deg,#001399 134px,#000999 205px,#1e0099 264px,#5a0099 375px,#909 483px,#990093 494px)"></i>
<i style="background:linear-gradient(90deg,#001299 135px,#000899 206px,#1d0099 262px,#5a0099 375px,#909 485px,#990095 492px)"></i>
<i style="background:linear-gradient(90deg,#019 136px,#000899 206px,#1c0099 260px,#990098 490px)"></i>
<i style="background:linear-gradient(90deg,#019 138px,#000799 206px,#1a0099 258px,#580099 375px,#980099 488px)"></i>
<i style="background:linear-gradient(90deg,#001099 139px,#000799 207px,#190099 256px,#560099 373px,#960099 486px)"></i>
<i style="background:linear-gradient(90deg,#001099 140px,#000799 207px,#180099 254px,#540099 371px,#930099 484px)"></i>
<i style="background:linear-gradient(90deg,#000f99 142px,#000699 207px,#160099 252px,#530099 369px,#910099 482px)"></i>
<i style="background:linear-gradient(90deg,#000f99 143px,#000699 208px,#150099 250px,#510099 367px,#8f0099 480px)"></i>
<i style="background:linear-gradient(90deg,#000e99 144px,#000699 208px,#140099 248px,#8d0099 478px)"></i>
<i style="background:linear-gradient(90deg,#000e99 146px,#000599 208px,#120099 246px,#8b0099 476px)"></i>
<i style="background:linear-gradient(90deg,#000d99 147px,#000599 209px,#109 244px,#809 474px)"></i>
<i style="background:linear-gradient(90deg,#000d99 148px,#000599 209px,#100099 243px,#860099 472px)"></i>
<i style="background:linear-gradient(90deg,#000c99 150px,#000499 209px,#0f0099 241px,#840099 470px)"></i>
<i style="background:linear-gradient(90deg,#000c99 151px,#000499 210px,#0e0099 239px,#820099 468px)"></i>
<i style="background:linear-gradient(90deg,#000b99 153px,#000499 210px,#0d0099 237px,#800099 466px)"></i>
<i style="background:linear-gradient(90deg,#000b99 154px,#000399 210px,#0c0099 235px,#7e0099 464px)"></i>
<i style="background:linear-gradient(90deg,#000a99 155px,#000399 211px,#0b0099 233px,#7c0099 462px)"></i>
<i style="background:linear-gradient(90deg,#000a99 157px,#000399 211px,#090099 231px,#7a0099 460px)"></i>
<i style="background:linear-gradient(90deg,#000999 158px,#000299 211px,#080099 229px,#780099 458px)"></i>
<i style="background:linear-gradient(90deg,#000999 160px,#000299 211px,#760099 456px)"></i>
<i style="background:linear-gradient(90deg,#000899 161px,#000299 212px,#750099 455px)"></i>
<i style="background:linear-gradient(90deg,#000899 163px,#000199 212px,#730099 453px)"></i>
<i style="background:linear-gradient(90deg,#000799 164px,#000199 212px,#710099 451px)"></i>
<i style="background:linear-gradient(90deg,#000799 166px,#000199 213px,#700099 449px)"></i>
<i style="background:linear-gradient(90deg,#000699 167px,#009 213px,#6e0099 447px)"></i>
<i style="background:linear-gradient(90deg,#000699 169px,#009 213px,#6c0099 445px)"></i>
<i style="background:linear-gradient(90deg,#000599 170px,#009 214px,#6a0099 443px)"></i>
<i style="background:linear-gradient(90deg,#000599 172px,#009 214px,#690099 441px)"></i>
<i style="background:linear-gradient(90deg,#000499 173px,#009 214px,#670099 439px)"></i>
<i style="background:linear-gradient(90deg,#000499 175px,#009 215px,#650099 437px)"></i>
<i style="background:linear-gradient(90deg,#000499 176px,#009 215px,#640099 435px)"></i>
<i style="background:linear-gradient(90deg,#000399 178px,#009 215px,#620099 433px)"></i>
<i style="background:linear-gradient(90deg,#000399 179px,#009 216px,#600099 431px)"></i>
<i style="background:linear-gradient(90deg,#000299 181px,#009 216px,#5f0099 429px)"></i>
<i style="background:linear-gradient(90deg,#000299 183px,#009 216px,#5d0099 427px)"></i>
<i style="background:linear-gradient(90deg,#000199 184px,#009 217px,#5c0099 425px)"></i>
<i style="background:linear-gradient(90deg,#000199 186px,#009 217px,#5a0099 423px)"></i>
<i style="background:linear-gradient(90deg,#000199 187px,#009 217px,#580099 421px)"></i>
<i style="background:linear-gradient(90deg,#009 189px,#009 218px,#570099 419px)"></i>
<i style="background:linear-gradient(90deg,#009 191px,#009 218px,#509 417px)"></i>
<i style="background:linear-gradient(90deg,#009 192px,#009 218px,#540099 416px)"></i>
<i style="background:linear-gradient(90deg,#009 194px,#009 219px,#530099 414px)"></i>
<i style="background:linear-gradient(90deg,#009 196px,#009 219px,#520099 412px)"></i>
<i style="background:linear-gradient(90deg,#009 197px,#009 219px,#500099 410px)"></i>
<i style="background:linear-gradient(90deg,#009 199px,#009 220px,#4f0099 408px)"></i>
<i style="background:linear-gradient(90deg,#009 201px,#009 220px,#4d0099 406px)"></i>
<i style="background:linear-gradient(90deg,#009 203px,#009 220px,#4c0099 404px)"></i>
<i style="background:linear-gradient(90deg,#009 204px,#009 221px,#4b0099 402px)"></i>
<i style="background:linear-gradient(90deg,#009 206px,#009 221px,#490099 400px)"></i>
<i style="background:linear-gradient(90deg,#009 208px,#009 221px,#480099 398px)"></i>
<i style="background:linear-gradient(90deg,#009 210px,#009 222px,#470099 396px)"></i>
<i style="background:linear-gradient(90deg,#009 212px,#009 222px,#450099 394px)"></i>
<i style="background:linear-gradient(90deg,#009 214px,#009 222px,#409 392px)"></i>
<i style="background:linear-gradient(90deg,#009 216px,#010099 225px,#430099 390px)"></i>
<i style="background:linear-gradient(90deg,#009 218px,#410099 388px)"></i>
<i style="background:linear-gradient(90deg,#009 220px,#400099 386px)"></i>
<i style="background:linear-gradient(90deg,#009 222px,#3f0099 384px)"></i>
<i style="background:linear-gradient(90deg,#009 224px,#3e0099 382px)"></i>
<i style="background:linear-gradient(90deg,#010099 226px,#3c0099 380px)"></i>
<i style="background:linear-gradient(90deg,#010099 228px,#3c0099 379px)"></i>
<i style="background:linear-gradient(90deg,#020099 230px,#3a0099 377px)"></i>
<i style="background:linear-gradient(90deg,#030099 232px,#390099 375px)"></i>
<i style="background:linear-gradient(90deg,#030099 234px,#380099 373px)"></i>
<i style="background:linear-gradient(90deg,#040099 237px,#370099 371px)"></i>
<i style="background:linear-gradient(90deg,#050099 239px,#360099 369px)"></i>
<i style="background:linear-gradient(90deg,#050099 241px,#350099 367px)"></i>
<i style="background:linear-gradient(90deg,#060099 243px,#340099 365px)"></i>
<i style="background:linear-gradient(90deg,#070099 246px,#320099 363px)"></i>
<i style="background:linear-gradient(90deg,#080099 248px,#310099 361px)"></i>
<i style="background:linear-gradient(90deg,#080099 250px,#300099 359px)"></i>
<i style="background:linear-gradient(90deg,#090099 253px,#2f0099 357px)"></i>
<i style="background:linear-gradient(90deg,#0a0099 255px,#2e0099 355px)"></i>
<i style="background:linear-gradient(90deg,#0a0099 257px,#2d0099 353px)"></i>
<i style="background:linear-gradient(90deg,#0b0099 260px,#2c0099 351px)"></i>
<i style="background:linear-gradient(90deg,#0c0099 262px,#2b0099 349px)"></i>
<i style="background:linear-gradient(90deg,#0d0099 265px,#2a0099 347px)"></i>
<i style="background:linear-gradient(90deg,#0d0099 267px,#290099 345px)"></i>
<i style="background:linear-gradient(90deg,#0e0099 270px,#280099 343px)"></i>
<i style="background:linear-gradient(90deg,#0e0099 272px,#270099 341px)"></i>
<i style="background:linear-gradient(90deg,#0f0099 274px,#260099 340px)"></i>
<i style="background:linear-gradient(90deg,#100099 277px,#250099 338px)"></i>
<i style="background:linear-gradient(90deg,#100099 279px,#240099 336px)"></i>
<i style="background:linear-gradient(90deg,#109 282px,#230099 334px)"></i>
<i style="background:linear-gradient(90deg,#120099 284px,#209 332px)"></i>
<i style="background:linear-gradient(90deg,#120099 286px,#210099 330px)"></i>
<i style="background:linear-gradient(90deg,#130099 289px,#200099 328px)"></i>
<i style="background:linear-gradient(90deg,#140099 291px,#200099 326px)"></i>
<i style="background:linear-gradient(90deg,#140099 294px,#1f0099 324px)"></i>
<i style="background:linear-gradient(90deg,#150099 296px,#1e0099 322px)"></i>
<i style="background:linear-gradient(90deg,#150099 298px,#1d0099 320px)"></i>
<i style="background:linear-gradient(90deg,#160099 300px,#1c0099 318px)"></i>
<i style="background:linear-gradient(90deg,#170099 303px,#1b0099 316px)"></i>
</div>
<div class="cl" style="clip-path:polygon(550.9px 71.5px,151.4px 34.1px,213.3px 416.5px)">
<i style="margin-top:34px;background:linear-gradient(90deg,#00ff02 149px,#01ff02 152px,#30ff00 174px)"></i>
<i style="background:linear-gradient(90deg,#00ff06 149px,#00ff05 152px,#13ff04 161px,#64ff00 196px)"></i>
<i style="background:linear-gradient(90deg,#00ff0a 150px,#02ff09 153px,#3bff05 179px,#69ff01 198px,#9cff00 217px)"></i>
<i style="background:linear-gradient(90deg,#00ff0d 150px,#01ff0d 153px,#10ff0c 160px,#5aff07 192px,#9aff02 216px,#dcff00 238px)"></i>
<i style="background:linear-gradient(90deg,#0f1 150px,#0f1 153px,#16ff0f 163px,#69ff0a 198px,#b1ff05 224px,#feff00 248px,#ffdb00 260px)"></i>
<i style="background:linear-gradient(90deg,#00ff15 151px,#02ff15 154px,#1eff13 167px,#6bff0e 199px,#b1ff0a 224px,#ffff05 248px,#ffd201 263px,#fa0 281px)"></i>
<i style="background:linear-gradient(90deg,#00ff19 151px,#01ff19 154px,#1bff17 166px,#6bff12 199px,#b1ff0e 224px,#ffff0a 248px,#ffdc06 259px,#ffbc03 272px,#ffa001 286px,#ff8700 302px)"></i>
<i style="background:linear-gradient(90deg,#00ff1d 151px,#00ff1d 154px,#16ff1c 164px,#68ff17 198px,#afff13 223px,#fffe0f 248px,#ffd10a 263px,#ffab05 280px,#ff8902 300px,#ff6c00 324px)"></i>
<i style="background:linear-gradient(90deg,#00ff21 152px,#02ff21 155px,#1eff1f 168px,#6aff1c 199px,#acff18 222px,#fffd14 248px,#ffe110 257px,#ffc90d 266px,#ffb00a 277px,#ff9c07 288px,#ff7602 314px,#ff5700 345px)"></i>
<i style="background:linear-gradient(90deg,#00ff25 152px,#01ff25 155px,#1cff24 167px,#6aff20 199px,#b2ff1d 224px,#feff19 247px,#ffdd14 258px,#ffc110 269px,#ffa80d 281px,#ff9009 295px,#ff7b06 310px,#ff6703 327px,#ff4700 366px)"></i>
<i style="background:linear-gradient(90deg,#00ff29 152px,#00ff29 155px,#16ff28 165px,#67ff25 198px,#afff22 223px,#feff1f 247px,#ffda19 259px,#ffb913 272px,#ff9e0f 286px,#ff850b 302px,#ff6e07 320px,#ff5a04 340px,#ff3900 388px)"></i>
<i style="background:linear-gradient(90deg,#00ff2d 152px,#00ff2d 155px,#11ff2d 163px,#67ff2a 198px,#afff27 223px,#ffff24 247px,#ffd61d 260px,#ffb417 274px,#ff9611 290px,#ff7c0d 308px,#ff6409 329px,#ff5005 352px,#ff3d02 379px,#ff2d00 409px)"></i>
<i style="background:linear-gradient(90deg,#00ff32 153px,#01ff31 156px,#1aff31 167px,#6aff2e 199px,#afff2c 223px,#fffe29 247px,#ffd321 261px,#ffaf1a 276px,#ff8f14 294px,#ff740e 314px,#ff5c0a 337px,#ff4606 364px,#ff3402 395px,#ff2300 431px)"></i>
<i style="background:linear-gradient(90deg,#00ff36 153px,#00ff36 156px,#15ff35 165px,#67ff33 198px,#acff31 222px,#fffe2f 247px,#ffd226 261px,#ffab1d 278px,#ff8a16 297px,#ff6c10 320px,#ff530b 346px,#ff3e06 376px,#ff2b02 411px,#ff1b00 452px)"></i>
<i style="background:linear-gradient(90deg,#00ff3a 153px,#00ff3a 156px,#0fff3a 163px,#64ff38 197px,#aaff36 221px,#feff35 246px,#fffd34 247px,#ffcf2a 262px,#ffa620 280px,#ff8318 301px,#ff6512 326px,#ff4c0c 355px,#ff3607 388px,#ff2403 427px,#ff1400 473px)"></i>
<i style="background:linear-gradient(90deg,#00ff3e 154px,#01ff3e 157px,#18ff3e 167px,#66ff3d 198px,#a7ff3c 220px,#feff3a 246px,#fffc39 247px,#ffcb2e 263px,#ff9f23 283px,#ff7c1a 306px,#ff5e13 332px,#ff450d 363px,#ff3007 400px,#ff1d03 444px,#ff0e00 495px)"></i>
<i style="background:linear-gradient(90deg,#00ff43 154px,#01ff43 157px,#15ff43 166px,#69ff42 199px,#b0ff41 223px,#ffff40 246px,#ffe439 254px,#ffca32 263px,#ff9f27 283px,#ff7a1d 307px,#ff5a15 336px,#ff400e 370px,#ff2a08 411px,#ff1703 459px,#ff0800 516px)"></i>
<i style="background:linear-gradient(90deg,#00ff47 154px,#00ff47 157px,#10ff47 164px,#66ff47 198px,#adff46 222px,#fffe45 246px,#ffe03d 255px,#ffc736 264px,#ffb030 274px,#ff9a2a 285px,#ff751f 310px,#ff5516 341px,#ff3b0f 377px,#ff2509 421px,#ff1204 474px,#ff0300 537px)"></i>
<i style="background:linear-gradient(90deg,#00ff4c 155px,#01ff4c 158px,#18ff4c 168px,#68ff4c 199px,#adff4c 222px,#fffe4b 246px,#ffe042 255px,#ffc63b 264px,#ffaf34 274px,#ff982d 286px,#ff7121 313px,#ff5118 345px,#ff3610 384px,#ff2109 430px,#ff0e04 487px,#f00 553px)"></i>
<i style="background:linear-gradient(90deg,#00ff50 155px,#01ff50 158px,#13ff50 166px,#65ff51 198px,#aaff51 221px,#fffd51 246px,#ffdf47 255px,#ffc63f 264px,#ffae38 274px,#ff9731 286px,#ff7024 313px,#ff501a 345px,#ff3612 384px,#ff200b 431px,#ff0d05 490px,#ff0001 553px)"></i>
<i style="background:linear-gradient(90deg,#0f5 155px,#0f5 158px,#0eff55 164px,#62ff56 197px,#a7ff57 220px,#feff57 245px,#fffc56 246px,#ffde4c 255px,#ffc544 264px,#ffae3c 274px,#ff9634 286px,#ff7128 312px,#ff511d 344px,#ff3614 383px,#ff200d 429px,#ff0d07 488px,#ff0002 551px)"></i>
<i style="background:linear-gradient(90deg,#00ff5a 156px,#01ff5a 159px,#1bff5a 170px,#6aff5b 200px,#b1ff5c 223px,#ffff5d 245px,#ffe053 254px,#ffc74a 263px,#ffaf41 273px,#ff9739 285px,#ff712b 311px,#ff5120 343px,#ff3617 381px,#ff200f 428px,#ff0d08 486px,#ff0003 549px)"></i>
<i style="background:linear-gradient(90deg,#00ff5e 156px,#01ff5e 159px,#13ff5f 167px,#67ff60 199px,#aeff62 222px,#ffff63 245px,#ffe058 254px,#ffc64e 263px,#ffae46 273px,#ff983d 284px,#ff722f 310px,#ff5123 342px,#ff3619 380px,#ff2011 427px,#ff0d0a 485px,#ff0005 547px)"></i>
<i style="background:linear-gradient(90deg,#00ff63 156px,#00ff63 159px,#0eff64 165px,#64ff66 198px,#abff67 221px,#fffe69 245px,#ffdf5d 254px,#ffc553 263px,#ffad4a 273px,#ff9841 284px,#ff7132 310px,#ff5126 341px,#ff361c 379px,#ff2013 425px,#ff0d0c 483px,#ff0006 545px)"></i>
<i style="background:linear-gradient(90deg,#00ff68 157px,#02ff68 160px,#17ff69 169px,#67ff6b 199px,#abff6d 221px,#fffd6f 245px,#ffde62 254px,#ffc458 263px,#ffad4e 273px,#ff9745 284px,#ff7036 310px,#ff5029 341px,#ff361e 379px,#ff2015 424px,#ff0d0d 481px,#ff0008 543px)"></i>
<i style="background:linear-gradient(90deg,#00ff6d 157px,#01ff6d 160px,#11ff6e 167px,#64ff71 198px,#a8ff73 220px,#feff76 244px,#fffc75 245px,#ffdd68 254px,#ffc45d 263px,#ffac53 273px,#ff9649 284px,#ff7139 309px,#ff512c 340px,#ff3620 378px,#ff2017 423px,#ff0d0f 480px,#ff0009 541px)"></i>
<i style="background:linear-gradient(90deg,#00ff72 157px,#00ff72 160px,#11ff73 167px,#66ff76 199px,#afff79 222px,#feff7d 244px,#ffe06f 253px,#ffc663 262px,#ffad58 272px,#ff974e 283px,#ff713d 308px,#ff512f 339px,#ff3623 376px,#ff2019 421px,#ff0d11 478px,#ff000a 539px)"></i>
<i style="background:linear-gradient(90deg,#0f7 158px,#02ff77 161px,#1aff78 171px,#69ff7c 200px,#b2ff7f 223px,#ffff83 244px,#ffe276 252px,#ffc769 261px,#ffaf5e 271px,#ff9853 282px,#ff7241 307px,#ff5132 338px,#ff3626 375px,#ff201b 420px,#ff0d12 476px,#ff000c 537px)"></i>
<i style="background:linear-gradient(90deg,#00ff7c 158px,#01ff7c 161px,#12ff7d 168px,#66ff81 199px,#acff85 221px,#fffe89 244px,#ffe17b 252px,#ffc76e 261px,#ffae62 271px,#ff9857 282px,#ff7145 307px,#ff5035 338px,#ff3628 375px,#ff201d 419px,#ff0d14 475px,#ff000d 535px)"></i>
<i style="background:linear-gradient(90deg,#00ff81 158px,#00ff81 161px,#0cff82 166px,#63ff87 198px,#a8ff8b 220px,#fffd8f 244px,#ffe181 252px,#ffc673 261px,#ffad67 271px,#ff975b 282px,#ff7048 307px,#ff5138 337px,#ff362a 374px,#ff201f 418px,#ff0d16 473px,#ff000f 533px)"></i>
<i style="background:linear-gradient(90deg,#00ff86 159px,#02ff87 162px,#16ff88 170px,#65ff8d 199px,#a8ff91 220px,#fdff97 243px,#fffd96 244px,#ffe087 252px,#ffc578 261px,#ffac6b 271px,#ff9660 282px,#ff704b 307px,#ff513b 336px,#ff362d 372px,#ff2022 416px,#ff0e18 471px,#ff0010 531px)"></i>
<i style="background:linear-gradient(90deg,#00ff8b 159px,#01ff8c 162px,#10ff8d 168px,#62ff93 198px,#a5ff97 219px,#feff9e 243px,#fffc9c 244px,#ffdf8c 252px,#ffc47e 261px,#ffac70 271px,#ff9765 281px,#ff7050 306px,#ff503e 336px,#ff3630 372px,#ff2024 416px,#ff0d19 470px,#ff0012 529px)"></i>
<i style="background:linear-gradient(90deg,#00ff90 159px,#00ff91 162px,#0fff92 168px,#65ff99 199px,#b0ff9f 222px,#ffffa5 243px,#ffe294 251px,#ffc684 260px,#ffad76 270px,#ff986a 280px,#ff7154 305px,#ff5041 335px,#ff3632 371px,#ff2026 415px,#ff0d1b 470px,#ff0013 528px)"></i>
<i style="background:linear-gradient(90deg,#00ff96 160px,#02ff97 163px,#19ff98 172px,#68ff9f 200px,#b0ffa5 222px,#fffeab 243px,#ffe19a 251px,#ffc58a 260px,#ffac7b 270px,#ff976e 280px,#ff7158 304px,#ff5145 334px,#ff3635 370px,#ff2028 413px,#ff0d1d 468px,#ff0015 526px)"></i>
<i style="background:linear-gradient(90deg,#00ff9b 160px,#01ff9c 163px,#13ff9e 170px,#64ffa5 199px,#a9ffab 220px,#fffeb2 243px,#ffe0a0 251px,#ffc48f 260px,#ffab80 270px,#ff9673 280px,#ff705c 304px,#ff5148 333px,#ff3638 369px,#ff202a 412px,#ff0d1f 467px,#ff0016 524px)"></i>
<i style="background:linear-gradient(90deg,#00ffa1 160px,#00ffa2 163px,#0dffa3 168px,#38ffa7 184px,#64ffab 199px,#a9ffb2 220px,#fdffba 242px,#fffdb8 243px,#ffdfa6 251px,#ffc494 260px,#ffab84 270px,#ff9677 280px,#ff705f 304px,#ff504b 333px,#ff363b 368px,#ff202d 411px,#ff0d21 465px,#ff0018 522px)"></i>
<i style="background:linear-gradient(90deg,#00ffa7 161px,#02ffa7 164px,#17ffa9 172px,#67ffb2 200px,#a6ffb8 219px,#feffc1 242px,#fffcbf 243px,#ffdeac 251px,#ffc69c 259px,#ffac8b 269px,#ff977d 279px,#ff7064 303px,#ff504f 332px,#ff363d 367px,#ff202f 410px,#ff0d22 464px,#ff001a 520px)"></i>
<i style="background:linear-gradient(90deg,#00ffac 161px,#01ffad 164px,#13ffaf 171px,#67ffb8 200px,#b1ffc0 222px,#ffffc8 242px,#ffe1b4 250px,#ffc8a3 258px,#ffad91 268px,#ff9883 278px,#ff7168 302px,#ff5152 331px,#ff3640 366px,#ff2031 408px,#ff0d25 461px,#ff001b 518px)"></i>
<i style="background:linear-gradient(90deg,#00ffb2 161px,#00ffb3 164px,#10ffb4 170px,#66ffbe 200px,#adffc7 221px,#ffffd0 242px,#ffe0ba 250px,#ffc7a9 258px,#ffad96 268px,#ff9787 278px,#ff706c 302px,#ff5156 330px,#ff3643 365px,#ff2034 407px,#ff0d26 460px,#ff001d 516px)"></i>
<i style="background:linear-gradient(90deg,#00ffb8 162px,#02ffb9 165px,#1affbc 174px,#69ffc5 201px,#adffce 221px,#fffed7 242px,#ffdfc1 250px,#ffc6ae 258px,#ffae9d 267px,#ff988d 277px,#ff7170 301px,#ff515a 329px,#ff3746 363px,#ff2036 405px,#ff0d28 458px,#ff001e 514px)"></i>
<i style="background:linear-gradient(90deg,#00ffbe 162px,#01ffbf 165px,#11ffc1 171px,#66ffcb 200px,#aaffd4 220px,#fffdde 242px,#ffdec7 250px,#ffc5b4 258px,#ffada2 267px,#ff9792 277px,#ff7074 301px,#ff505d 329px,#ff3649 363px,#ff2038 405px,#ff0d2a 457px,#ff0020 512px)"></i>
<i style="background:linear-gradient(90deg,#00ffc3 162px,#00ffc4 165px,#0bffc6 169px,#35ffcb 184px,#62ffd2 199px,#a7ffdb 219px,#feffe7 241px,#fffce5 242px,#ffdecd 250px,#ffc4ba 258px,#ffaca7 267px,#ff9796 277px,#ff7079 300px,#ff5060 328px,#ff364c 362px,#ff203b 403px,#ff0d2d 455px,#f02 510px)"></i>
<i style="background:linear-gradient(90deg,#00ffca 163px,#00ffca 165px,#18ffce 174px,#68ffd9 201px,#b2ffe4 222px,#feffef 241px,#ffe0d6 249px,#ffc6c2 257px,#ffaeae 266px,#ff989d 276px,#ff717e 299px,#ff5164 327px,#ff364f 361px,#ff203d 402px,#ff0d2f 453px,#ff0024 508px)"></i>
<i style="background:linear-gradient(90deg,#00ffd0 163px,#01ffd1 166px,#14ffd4 173px,#68ffe0 201px,#b2ffeb 222px,#fffff7 241px,#ffdfdd 249px,#ffc5c8 257px,#ffadb4 266px,#ff97a1 276px,#ff7082 299px,#ff5168 326px,#ff3652 360px,#ff2040 400px,#ff0d31 451px,#ff0025 506px)"></i>
<i style="background:linear-gradient(90deg,#00ffd6 163px,#00ffd7 166px,#0effd9 171px,#65ffe7 200px,#abfff2 220px,#fffefe 241px,#ffdfe3 249px,#ffc5cd 257px,#ffacb9 266px,#ff96a6 276px,#ff6f86 299px,#ff506b 326px,#ff3655 359px,#ff2042 400px,#ff0d33 451px,#ff0027 504px)"></i>
<i style="background:linear-gradient(90deg,#00ffdc 163px,#02ffde 167px,#54ffeb 195px,#91fff5 213px,#ceffff 229px,#fff5fe 243px,#ffdae7 250px,#ffc1d1 258px,#ffa9bc 267px,#ff93a9 277px,#ff6d88 300px,#ff4e6e 327px,#ff3557 360px,#ff1f45 400px,#ff0d35 450px,#ff0029 502px)"></i>
<i style="background:linear-gradient(90deg,#00ffe3 164px,#01ffe4 167px,#4afff0 192px,#a0ffff 217px,#ffecfe 245px,#ffd2e7 252px,#ffbad2 260px,#ffa3bd 269px,#ff8eab 279px,#ff6a8a 302px,#ff4c6f 329px,#ff3359 361px,#ff1e47 400px,#ff0c37 449px,#ff002b 500px)"></i>
<i style="background:linear-gradient(90deg,#00ffe9 164px,#01ffea 167px,#17ffee 175px,#43fff6 190px,#75ffff 205px,#ffe3fe 247px,#ffc8e5 255px,#ffb1d0 263px,#ff8aac 281px,#ff688c 303px,#ff4a72 330px,#ff325b 362px,#ff1e49 400px,#ff0c39 448px,#ff002d 498px)"></i>
<i style="background:linear-gradient(90deg,#00ffef 164px,#02fff1 168px,#4cffff 193px,#9defff 219px,#ffdbfe 249px,#ffc1e5 257px,#ffabd1 265px,#ff85ad 283px,#ff648e 305px,#ff4974 331px,#ff315e 362px,#ff1d4b 400px,#ff0c3b 447px,#ff002f 496px)"></i>
<i style="background:linear-gradient(90deg,#00fff6 165px,#02fff8 168px,#27ffff 181px,#4df7ff 194px,#9ce8ff 220px,#ffd3fe 251px,#ffa5d2 267px,#ff81ae 285px,#ff618f 307px,#ff4675 333px,#ff2f5f 364px,#ff1c4d 401px,#ff0c3c 447px,#ff0031 494px)"></i>
<i style="background:linear-gradient(90deg,#00fffd 165px,#01fffe 168px,#47f1ff 193px,#9be1ff 221px,#ffccfe 253px,#ffa0d2 269px,#ff7daf 287px,#ff5e91 309px,#ff4578 334px,#ff2e61 365px,#ff1c4f 401px,#ff0b3e 446px,#ff0032 492px)"></i>
<i style="background:linear-gradient(90deg,#00fbff 165px,#00f9ff 168px,#45ebff 193px,#9adaff 222px,#ffc4fe 255px,#ff9ad3 271px,#ff78b0 289px,#ff5c93 310px,#ff437a 335px,#ff2e64 365px,#ff1b51 401px,#ff0b40 446px,#ff0034 490px)"></i>
<i style="background:linear-gradient(90deg,#00f4ff 166px,#02f2ff 169px,#51e2ff 198px,#a1d1ff 226px,#ffbdfe 257px,#ff95d4 273px,#ff74b2 291px,#ff5994 312px,#ff417b 337px,#ff2c66 366px,#ff1b53 401px,#ff0b42 445px,#ff0036 488px)"></i>
<i style="background:linear-gradient(90deg,#0ef 166px,#01ecff 169px,#4cddff 197px,#9dccff 226px,#ffb7fe 259px,#ff92d7 274px,#ff72b4 292px,#ff5797 313px,#ff3f7d 338px,#ff2b68 367px,#ff1a56 400px,#ff0b45 443px,#ff0038 486px)"></i>
<i style="background:linear-gradient(90deg,#00e8ff 166px,#00e6ff 169px,#47d7ff 196px,#9cc5ff 227px,#ffb0fe 261px,#ff8dd8 276px,#ff6eb5 294px,#ff5498 315px,#ff3d7f 339px,#ff2a6a 367px,#ff1a58 400px,#ff0b47 442px,#ff003b 484px)"></i>
<i style="background:linear-gradient(90deg,#00e2ff 167px,#02e0ff 170px,#54cfff 202px,#a3beff 231px,#ffaafe 263px,#ff88d8 278px,#ff6ab6 296px,#ff529a 316px,#ff3c82 340px,#ff296c 368px,#ff195a 400px,#ff0a49 442px,#ff003d 482px)"></i>
<i style="background:linear-gradient(90deg,#00dcff 167px,#01dbff 170px,#4fcaff 201px,#9fb9ff 231px,#ffa4fe 265px,#ff83d9 280px,#ff67b7 298px,#ff4f9c 318px,#ff3a83 342px,#ff286e 369px,#ff185c 401px,#ff094a 443px,#ff003e 481px)"></i>
<i style="background:linear-gradient(90deg,#00d7ff 167px,#00d5ff 170px,#4bc5ff 200px,#9eb3ff 232px,#ff9efe 267px,#ff7fd9 282px,#ff63b8 300px,#ff4c9d 320px,#ff3885 343px,#ff2770 370px,#ff185e 401px,#ff094c 442px,#ff0041 479px)"></i>
<i style="background:linear-gradient(90deg,#00d1ff 168px,#02d0ff 171px,#57bdff 206px,#a5acff 236px,#ff98fe 269px,#ff7ada 284px,#ff61bb 301px,#ff4a9f 321px,#ff3787 344px,#ff2672 370px,#ff1760 401px,#ff084e 442px,#ff0043 477px)"></i>
<i style="background:linear-gradient(90deg,#0cf 168px,#01cbff 171px,#53b9ff 205px,#a4a7ff 237px,#ff93fe 271px,#ff76da 286px,#ff5ebc 303px,#ff48a0 323px,#ff3589 345px,#ff2574 371px,#ff1662 401px,#ff0850 441px,#ff0045 475px)"></i>
<i style="background:linear-gradient(90deg,#00c8ff 168px,#00c6ff 171px,#4eb5ff 204px,#a0a3ff 237px,#ff8eff 273px,#ff72db 288px,#ff5abc 305px,#ff45a1 325px,#ff338a 347px,#ff2376 373px,#ff1564 402px,#ff0047 473px)"></i>
<i style="background:linear-gradient(90deg,#00c3ff 169px,#02c1ff 172px,#58aeff 209px,#a79cff 241px,#f8f 275px,#ff6edc 290px,#ff57bd 307px,#ff43a3 326px,#ff328c 348px,#ff2278 373px,#ff1567 401px,#ff004a 471px)"></i>
<i style="background:linear-gradient(90deg,#00beff 169px,#01bdff 172px,#56aaff 209px,#a698ff 242px,#ff84ff 277px,#ff6adc 292px,#ff55c0 308px,#ff42a5 327px,#ff308e 349px,#ff227b 373px,#ff1569 401px,#ff004c 469px)"></i>
<i style="background:linear-gradient(90deg,#00baff 169px,#00b9ff 172px,#51a6ff 208px,#a593ff 243px,#ff7fff 279px,#f6d 294px,#ff52c0 310px,#ff3fa6 329px,#ff2f90 350px,#ff217c 374px,#ff146b 401px,#ff004e 467px)"></i>
<i style="background:linear-gradient(90deg,#00b5ff 170px,#02b4ff 173px,#5ba0ff 213px,#a88eff 246px,#ff7aff 281px,#ff62dd 296px,#ff4fc1 312px,#ff3da9 330px,#ff2d92 351px,#ff207f 374px,#ff136d 401px,#ff0051 465px)"></i>
<i style="background:linear-gradient(90deg,#00b1ff 170px,#01b0ff 173px,#599cff 213px,#a78aff 247px,#ff76ff 283px,#ff60df 297px,#ff4dc3 313px,#ff3cab 331px,#ff2c94 352px,#ff1f81 375px,#ff1370 401px,#ff0053 463px)"></i>
<i style="background:linear-gradient(90deg,#00adff 170px,#00acff 173px,#5499ff 212px,#a686ff 248px,#ff71ff 285px,#ff5de0 299px,#ff4ac4 315px,#ff39ac 333px,#ff2b96 353px,#ff1e83 376px,#ff1272 401px,#ff0056 461px)"></i>
<i style="background:linear-gradient(90deg,#00a9ff 171px,#02a8ff 174px,#5d93ff 217px,#ff6dff 287px,#ff59e0 301px,#ff47c5 317px,#ff38ae 334px,#ff2998 354px,#ff1d85 376px,#ff1274 401px,#ff0058 459px)"></i>
<i style="background:linear-gradient(90deg,#00a6ff 171px,#01a4ff 174px,#5990ff 216px,#a97dff 252px,#ff69ff 289px,#ff56e1 303px,#ff45c7 318px,#ff36b0 335px,#ff299b 354px,#ff1c88 376px,#f17 400px,#ff005b 457px)"></i>
<i style="background:linear-gradient(90deg,#00a2ff 171px,#00a1ff 174px,#578cff 216px,#a879ff 253px,#ff65ff 291px,#ff52e1 305px,#ff42c8 320px,#ff34b1 337px,#ff279d 355px,#ff1179 400px,#ff005d 455px)"></i>
<i style="background:linear-gradient(90deg,#009eff 172px,#029dff 175px,#5f87ff 221px,#ff61ff 293px,#ff50e3 306px,#ff41ca 321px,#ff32b3 338px,#ff269f 356px,#ff117c 399px,#ff0060 453px)"></i>
<i style="background:linear-gradient(90deg,#009bff 172px,#0199ff 175px,#5b84ff 220px,#aa71ff 257px,#ff5dff 295px,#ff4de4 308px,#ff3ecb 323px,#ff31b5 339px,#ff25a1 357px,#ff107e 399px,#ff0062 451px)"></i>
<i style="background:linear-gradient(90deg,#0098ff 172px,#0096ff 175px,#5981ff 220px,#a96eff 258px,#ff5aff 297px,#ff4ae4 310px,#ff3ccd 324px,#ff2fb7 340px,#ff23a3 358px,#ff0f81 399px,#ff0065 449px)"></i>
<i style="background:linear-gradient(90deg,#0094ff 173px,#0293ff 176px,#627cff 225px,#ff56ff 299px,#ff47e5 312px,#ff39cd 326px,#ff2db7 342px,#ff22a4 359px,#ff0f83 399px,#ff0068 447px)"></i>
<i style="background:linear-gradient(90deg,#0091ff 173px,#0190ff 176px,#5e79ff 224px,#ab67ff 262px,#ff53ff 301px,#ff45e7 313px,#ff38cf 327px,#ff21a7 359px,#ff0e86 398px,#ff006b 445px)"></i>
<i style="background:linear-gradient(90deg,#008eff 173px,#008dff 176px,#5a77ff 223px,#aa64ff 263px,#ff4fff 303px,#ff42e7 315px,#ff35d0 329px,#ff20a9 360px,#ff0e88 398px,#ff006e 443px)"></i>
<i style="background:linear-gradient(90deg,#008bff 174px,#0289ff 177px,#6472ff 229px,#ff4cff 305px,#ff34d2 330px,#ff1fab 361px,#ff0e8b 397px,#ff0071 441px)"></i>
<i style="background:linear-gradient(90deg,#08f 174px,#0186ff 177px,#606fff 228px,#ae5cff 268px,#ff49ff 307px,#ff31d2 332px,#ff1dad 362px,#ff0d8e 397px,#ff0074 439px)"></i>
<i style="background:linear-gradient(90deg,#0085ff 174px,#0084ff 177px,#5c6dff 227px,#ab5aff 268px,#ff46ff 309px,#ff30d4 333px,#ff1db0 362px,#ff0d91 396px,#f07 437px)"></i>
<i style="background:linear-gradient(90deg,#0082ff 174px,#0281ff 178px,#5a6bff 227px,#aa57ff 269px,#ff43ff 311px,#ff2dd5 335px,#ff1bb1 363px,#ff0c93 396px,#ff0079 436px)"></i>
<i style="background:linear-gradient(90deg,#007fff 175px,#017eff 178px,#6266ff 232px,#ff40ff 313px,#ff2cd7 336px,#ff1ab3 364px,#ff0b96 396px,#ff007c 434px)"></i>
<i style="background:linear-gradient(90deg,#007dff 175px,#007bff 178px,#5e64ff 231px,#ac51ff 273px,#ff3dff 315px,#ff29d7 338px,#ff19b5 365px,#ff0b98 396px,#ff007f 432px)"></i>
<i style="background:linear-gradient(90deg,#007aff 175px,#0279ff 179px,#5a63ff 230px,#ab4fff 274px,#ff3aff 317px,#ff28d9 339px,#ff18b8 365px,#ff0b9b 395px,#ff0083 430px)"></i>
<i style="background:linear-gradient(90deg,#07f 176px,#0176ff 179px,#635eff 236px,#ff37ff 319px,#ff26d9 341px,#ff17ba 366px,#ff0a9e 395px,#ff0086 428px)"></i>
<i style="background:linear-gradient(90deg,#0075ff 176px,#0074ff 179px,#605cff 235px,#af48ff 279px,#ff34ff 321px,#ff24db 342px,#ff16bc 366px,#ff0aa1 394px,#ff0089 426px)"></i>
<i style="background:linear-gradient(90deg,#0073ff 176px,#0271ff 180px,#5c5aff 234px,#ac46ff 279px,#ff32ff 323px,#ff22dc 344px,#ff15be 367px,#ff09a3 394px,#ff008d 424px)"></i>
<i style="background:linear-gradient(90deg,#0070ff 177px,#016fff 180px,#6356ff 239px,#ff2fff 325px,#ff21de 345px,#ff14c1 367px,#ff09a7 393px,#ff0090 422px)"></i>
<i style="background:linear-gradient(90deg,#006eff 177px,#006dff 180px,#6254ff 239px,#ff2dff 327px,#ff1fdf 346px,#ff13c3 368px,#ff08aa 392px,#ff0094 420px)"></i>
<i style="background:linear-gradient(90deg,#006cff 177px,#016aff 181px,#5e53ff 238px,#ad3fff 284px,#ff2aff 329px,#ff1ee1 347px,#ff12c6 368px,#ff08ad 392px,#ff0097 418px)"></i>
<i style="background:linear-gradient(90deg,#0069ff 178px,#0168ff 181px,#654fff 243px,#ff28ff 331px,#ff1ce1 349px,#ff11c7 369px,#ff07b0 391px,#ff009b 416px)"></i>
<i style="background:linear-gradient(90deg,#0067ff 178px,#06f 181px,#624dff 242px,#ff25ff 333px,#ff1ae3 350px,#ff10ca 369px,#ff07b4 390px,#ff009f 414px)"></i>
<i style="background:linear-gradient(90deg,#0065ff 178px,#0164ff 182px,#604cff 242px,#ae38ff 289px,#ff23ff 335px,#ff18e4 352px,#ff0fcc 370px,#ff07b6 390px,#ff00a3 412px)"></i>
<i style="background:linear-gradient(90deg,#0063ff 179px,#0162ff 182px,#6648ff 247px,#ff21ff 337px,#ff17e5 353px,#ff0ecf 370px,#ff00a7 410px)"></i>
<i style="background:linear-gradient(90deg,#0061ff 179px,#0060ff 182px,#6347ff 246px,#ff1fff 339px,#ff15e6 355px,#ff0dd0 371px,#ff00ab 408px)"></i>
<i style="background:linear-gradient(90deg,#005fff 179px,#005eff 182px,#6045ff 245px,#af31ff 294px,#ff1dff 341px,#ff0cd3 371px,#ff00af 406px)"></i>
<i style="background:linear-gradient(90deg,#005dff 180px,#025bff 184px,#6841ff 251px,#ff1aff 343px,#ff0cd6 371px,#ff00b3 404px)"></i>
<i style="background:linear-gradient(90deg,#005bff 180px,#015aff 183px,#6540ff 250px,#ff18ff 345px,#ff0ad8 372px,#ff00b7 402px)"></i>
<i style="background:linear-gradient(90deg,#0059ff 180px,#0058ff 183px,#623fff 249px,#ff16ff 347px,#ff0adb 372px,#f0b 400px)"></i>
<i style="background:linear-gradient(90deg,#0057ff 181px,#0455ff 186px,#683cff 254px,#ff14ff 349px,#ff09dd 372px,#ff00c0 398px)"></i>
<i style="background:linear-gradient(90deg,#0056ff 181px,#0154ff 184px,#643aff 253px,#ff12ff 351px,#ff08df 373px,#ff00c4 396px)"></i>
<i style="background:linear-gradient(90deg,#0054ff 181px,#0053ff 184px,#6339ff 253px,#ff10ff 353px,#ff07e2 373px,#ff00c9 394px)"></i>
<i style="background:linear-gradient(90deg,#0052ff 182px,#084fff 190px,#6936ff 258px,#ff0fff 355px,#ff06e5 373px,#ff00ce 392px)"></i>
<i style="background:linear-gradient(90deg,#0050ff 182px,#014fff 185px,#6635ff 257px,#ff0dff 357px,#ff00d3 390px)"></i>
<i style="background:linear-gradient(90deg,#004fff 182px,#004eff 185px,#6334ff 256px,#ff0bff 359px,#ff00d6 389px)"></i>
<i style="background:linear-gradient(90deg,#004dff 183px,#014cff 186px,#0a49ff 193px,#6a30ff 262px,#ff09ff 361px,#ff00dc 387px)"></i>
<i style="background:linear-gradient(90deg,#004bff 183px,#024aff 187px,#672fff 261px,#ff08ff 363px,#ff00e1 385px)"></i>
<i style="background:linear-gradient(90deg,#004aff 183px,#0049ff 186px,#642fff 260px,#ff06ff 365px,#ff00e6 383px)"></i>
<i style="background:linear-gradient(90deg,#0048ff 184px,#0147ff 187px,#0b44ff 195px,#6a2bff 265px,#ff04ff 367px,#ff00eb 381px)"></i>
<i style="background:linear-gradient(90deg,#0047ff 184px,#0445ff 190px,#682aff 265px,#ff03ff 369px,#ff00f1 379px)"></i>
<i style="background:linear-gradient(90deg,#0045ff 184px,#04f 187px,#662aff 264px,#ff01ff 371px,#ff00f7 377px)"></i>
<i style="background:linear-gradient(90deg,#04f 185px,#0242ff 189px,#5d2aff 259px,#ad15ff 317px,#f0f 373px,#ff00fc 375px)"></i>
<i style="background:linear-gradient(90deg,#0042ff 185px,#0640ff 192px,#6726ff 267px,#fc00ff 373px)"></i>
<i style="background:linear-gradient(90deg,#0041ff 185px,#0040ff 188px,#6126ff 264px,#f600ff 371px)"></i>
<i style="background:linear-gradient(90deg,#0040ff 185px,#013fff 189px,#5c26ff 261px,#f000ff 369px)"></i>
<i style="background:linear-gradient(90deg,#003eff 186px,#013dff 189px,#5f24ff 264px,#eb00ff 367px)"></i>
<i style="background:linear-gradient(90deg,#003dff 186px,#003cff 189px,#5824ff 260px,#e500ff 365px)"></i>
<i style="background:linear-gradient(90deg,#003cff 186px,#013bff 190px,#5424ff 257px,#e000ff 363px)"></i>
<i style="background:linear-gradient(90deg,#003aff 187px,#0139ff 190px,#5622ff 260px,#db00ff 361px)"></i>
<i style="background:linear-gradient(90deg,#0039ff 187px,#0038ff 190px,#5023ff 256px,#d500ff 359px)"></i>
<i style="background:linear-gradient(90deg,#0038ff 187px,#0137ff 191px,#4b23ff 253px,#d000ff 357px)"></i>
<i style="background:linear-gradient(90deg,#0037ff 188px,#0136ff 191px,#4e21ff 256px,#c0f 355px)"></i>
<i style="background:linear-gradient(90deg,#0035ff 188px,#0035ff 191px,#4921ff 253px,#c700ff 353px)"></i>
<i style="background:linear-gradient(90deg,#0034ff 188px,#0133ff 192px,#4321ff 249px,#c200ff 351px)"></i>
<i style="background:linear-gradient(90deg,#03f 189px,#0132ff 192px,#471fff 253px,#bd00ff 349px)"></i>
<i style="background:linear-gradient(90deg,#0032ff 189px,#0031ff 192px,#421fff 249px,#b900ff 347px)"></i>
<i style="background:linear-gradient(90deg,#0031ff 189px,#0030ff 192px,#3c20ff 245px,#b400ff 345px)"></i>
<i style="background:linear-gradient(90deg,#0030ff 190px,#012fff 193px,#401eff 249px,#b100ff 344px)"></i>
<i style="background:linear-gradient(90deg,#002fff 190px,#002eff 193px,#3a1eff 245px,#ad00ff 342px)"></i>
<i style="background:linear-gradient(90deg,#002eff 190px,#002dff 193px,#351eff 241px,#a900ff 340px)"></i>
<i style="background:linear-gradient(90deg,#002cff 191px,#012cff 194px,#3a1cff 246px,#a400ff 338px)"></i>
<i style="background:linear-gradient(90deg,#002bff 191px,#002bff 194px,#331dff 241px,#a000ff 336px)"></i>
<i style="background:linear-gradient(90deg,#002bff 191px,#002aff 194px,#2e1dff 237px,#9c00ff 334px)"></i>
<i style="background:linear-gradient(90deg,#0029ff 192px,#0128ff 195px,#331bff 242px,#9800ff 332px)"></i>
<i style="background:linear-gradient(90deg,#0028ff 192px,#0028ff 195px,#2d1bff 237px,#9400ff 330px)"></i>
<i style="background:linear-gradient(90deg,#0028ff 192px,#0027ff 195px,#271cff 232px,#9100ff 328px)"></i>
<i style="background:linear-gradient(90deg,#0026ff 193px,#0126ff 196px,#2c1aff 237px,#8d00ff 326px)"></i>
<i style="background:linear-gradient(90deg,#0026ff 193px,#0025ff 196px,#261aff 232px,#8900ff 324px)"></i>
<i style="background:linear-gradient(90deg,#0025ff 193px,#0024ff 196px,#201bff 227px,#8600ff 322px)"></i>
<i style="background:linear-gradient(90deg,#0024ff 194px,#0123ff 197px,#2519ff 233px,#8200ff 320px)"></i>
<i style="background:linear-gradient(90deg,#0023ff 194px,#02f 197px,#2019ff 228px,#7f00ff 318px)"></i>
<i style="background:linear-gradient(90deg,#02f 194px,#0021ff 197px,#191aff 222px,#7b00ff 316px)"></i>
<i style="background:linear-gradient(90deg,#0021ff 195px,#0120ff 198px,#2017ff 229px,#7800ff 314px)"></i>
<i style="background:linear-gradient(90deg,#0020ff 195px,#001fff 198px,#1918ff 223px,#7400ff 312px)"></i>
<i style="background:linear-gradient(90deg,#001fff 195px,#001eff 198px,#1319ff 217px,#7100ff 310px)"></i>
<i style="background:linear-gradient(90deg,#001eff 196px,#1917ff 224px,#6e00ff 308px)"></i>
<i style="background:linear-gradient(90deg,#001dff 196px,#001dff 199px,#1318ff 218px,#6b00ff 306px)"></i>
<i style="background:linear-gradient(90deg,#001dff 196px,#001cff 199px,#0d18ff 212px,#6800ff 304px)"></i>
<i style="background:linear-gradient(90deg,#001cff 196px,#061aff 205px,#6400ff 302px)"></i>
<i style="background:linear-gradient(90deg,#001bff 197px,#0d17ff 213px,#6100ff 300px)"></i>
<i style="background:linear-gradient(90deg,#001aff 197px,#0618ff 206px,#5e00ff 298px)"></i>
<i style="background:linear-gradient(90deg,#001aff 197px,#0119ff 201px,#5d00ff 297px)"></i>
<i style="background:linear-gradient(90deg,#0019ff 198px,#0716ff 208px,#5a00ff 295px)"></i>
<i style="background:linear-gradient(90deg,#0018ff 198px,#0017ff 201px,#5700ff 293px)"></i>
<i style="background:linear-gradient(90deg,#0017ff 198px,#0116ff 202px,#5400ff 291px)"></i>
<i style="background:linear-gradient(90deg,#0016ff 199px,#0116ff 202px,#5100ff 289px)"></i>
<i style="background:linear-gradient(90deg,#0016ff 199px,#0015ff 202px,#4e00ff 287px)"></i>
<i style="background:linear-gradient(90deg,#0015ff 199px,#0114ff 203px,#4c00ff 285px)"></i>
<i style="background:linear-gradient(90deg,#0014ff 200px,#0113ff 203px,#4900ff 283px)"></i>
<i style="background:linear-gradient(90deg,#0014ff 200px,#0013ff 203px,#4600ff 281px)"></i>
<i style="background:linear-gradient(90deg,#0013ff 200px,#0112ff 204px,#40f 279px)"></i>
<i style="background:linear-gradient(90deg,#0012ff 201px,#0111ff 204px,#4100ff 277px)"></i>
<i style="background:linear-gradient(90deg,#0012ff 201px,#01f 204px,#3f00ff 275px)"></i>
<i style="background:linear-gradient(90deg,#01f 201px,#0010ff 204px,#3c00ff 273px)"></i>
<i style="background:linear-gradient(90deg,#0010ff 202px,#3a00ff 271px)"></i>
<i style="background:linear-gradient(90deg,#0010ff 202px,#000fff 205px,#3800ff 269px)"></i>
<i style="background:linear-gradient(90deg,#000fff 202px,#000eff 205px,#3500ff 267px)"></i>
<i style="background:linear-gradient(90deg,#000eff 203px,#30f 265px)"></i>
<i style="background:linear-gradient(90deg,#000eff 203px,#000dff 206px,#3100ff 263px)"></i>
<i style="background:linear-gradient(90deg,#000dff 203px,#000cff 206px,#2e00ff 261px)"></i>
<i style="background:linear-gradient(90deg,#000cff 204px,#2c00ff 259px)"></i>
<i style="background:linear-gradient(90deg,#000cff 204px,#000bff 207px,#2a00ff 257px)"></i>
<i style="background:linear-gradient(90deg,#000bff 204px,#000bff 207px,#2800ff 255px)"></i>
<i style="background:linear-gradient(90deg,#000aff 205px,#2500ff 253px)"></i>
<i style="background:linear-gradient(90deg,#000aff 205px,#2300ff 251px)"></i>
<i style="background:linear-gradient(90deg,#0009ff 205px,#0009ff 208px,#20f 250px)"></i>
<i style="background:linear-gradient(90deg,#0009ff 206px,#2000ff 248px)"></i>
<i style="background:linear-gradient(90deg,#0008ff 206px,#1e00ff 246px)"></i>
<i style="background:linear-gradient(90deg,#0008ff 206px,#0007ff 209px,#1c00ff 244px)"></i>
<i style="background:linear-gradient(90deg,#0007ff 207px,#1a00ff 242px)"></i>
<i style="background:linear-gradient(90deg,#0007ff 207px,#1800ff 240px)"></i>
<i style="background:linear-gradient(90deg,#0006ff 207px,#1600ff 238px)"></i>
<i style="background:linear-gradient(90deg,#0006ff 207px,#0105ff 211px,#1400ff 236px)"></i>
<i style="background:linear-gradient(90deg,#0005ff 208px,#1200ff 234px)"></i>
<i style="background:linear-gradient(90deg,#0004ff 208px,#1000ff 232px)"></i>
<i style="background:linear-gradient(90deg,#0004ff 208px,#0e00ff 230px)"></i>
<i style="background:linear-gradient(90deg,#0003ff 209px,#0c00ff 228px)"></i>
<i style="background:linear-gradient(90deg,#0003ff 209px,#0b00ff 226px)"></i>
<i style="background:linear-gradient(90deg,#0002ff 209px,#0900ff 224px)"></i>
<i style="background:linear-gradient(90deg,#0002ff 210px,#0700ff 222px)"></i>
<i style="background:linear-gradient(90deg,#0001ff 210px,#0500ff 220px)"></i>
<i style="background:linear-gradient(90deg,#0001ff 210px,#0400ff 218px)"></i>
<i style="background:linear-gradient(90deg,#00f 211px,#0200ff 216px)"></i>
</div>
</div>
<div class="a" style="left:1613.5px;top:564px;width:290px;height:31px;background:#2f2f2f"></div>
<span class="t" style="left:1613.80px;top:569.82px;font-size:21.00px;line-height:21.00px;color:#f2f2f2;transform:scaleX(1.0808);-webkit-text-stroke:.25px #f0f0f0;">RGB Triplet: 0, 133, 163</span>
<div class="a" style="left:1669px;top:400px;width:234px;height:155px;background:#2b2b2b"></div>
<div class="a" style="left:1671.7px;top:402.6px;width:227.4px;height:148.3px;border:1.5px solid #989898;overflow:hidden;background:linear-gradient(#007c9b,#00699b 50%,#004f98)"><div class="a" style="left:0;top:0;width:229px;height:149px;background:linear-gradient(#00839c,#006da2 50%,#00589f);-webkit-mask-image:linear-gradient(90deg,transparent 20%,#000 80%);mask-image:linear-gradient(90deg,transparent 20%,#000 80%)"></div><div class="a" style="left:0;top:0;width:229px;height:149px;clip-path:polygon(143.8px 0,229px 0,229px 149px,80.8px 149px);background:linear-gradient(#00c6ff,#00a4ff 50%,#0a88ff)"><div class="a" style="left:0;top:0;width:229px;height:149px;background:linear-gradient(#34beff,#3a9cff 50%,#4a7cff);-webkit-mask-image:linear-gradient(100deg,transparent 42%,#000 100%);mask-image:linear-gradient(100deg,transparent 42%,#000 100%)"></div></div></div>
<div class="a" style="left:369px;top:657.4px;width:1550.2px;height:260.9px;background:#060606;box-shadow:0 -.8px 0 0 #3a3a3a,-.8px 0 0 0 #3a3a3a"></div>
<div class="a" style="left:371px;top:659.3px;width:1546px;height:28.6px;background:linear-gradient(#2f2f2f 0,#2e2e2e 47.5%,#1c1c1c 49.5%,#101010 100%)"></div>
<div class="row" style="top:687.8px;height:27.3px;background:#414141"></div>
<div class="row" style="top:714.5px;height:27.3px;background:#818181"></div>
<div class="row" style="top:741.2px;height:27.3px;background:#414141"></div>
<div class="row" style="top:767.8px;height:27.3px;background:#818181"></div>
<div class="row" style="top:794.5px;height:27.3px;background:#414141"></div>
<div class="row" style="top:821.2px;height:27.3px;background:#818181"></div>
<div class="row" style="top:847.9px;height:27.3px;background:#414141"></div>
<div class="row" style="top:874.6px;height:27.3px;background:#818181"></div>
<div class="a" style="left:371px;top:658px;width:1546px;height:244px;overflow:hidden">
<span class="t" style="left:213.40px;top:9.12px;font-size:14.40px;line-height:14.40px;color:#f4f4f4;font-family:'DejaVu Sans','Liberation Sans',sans-serif;transform:scaleX(1.3422);">White</span>
<span class="t" style="left:319.60px;top:9.12px;font-size:14.40px;line-height:14.40px;color:#f4f4f4;font-family:'DejaVu Sans','Liberation Sans',sans-serif;transform:scaleX(1.2350);">Gray 80</span>
<span class="t" style="left:426.70px;top:9.12px;font-size:14.40px;line-height:14.40px;color:#f4f4f4;font-family:'DejaVu Sans','Liberation Sans',sans-serif;transform:scaleX(1.2280);">Gray 65</span>
<span class="t" style="left:528.00px;top:9.12px;font-size:14.40px;line-height:14.40px;color:#f4f4f4;font-family:'DejaVu Sans','Liberation Sans',sans-serif;transform:scaleX(1.2350);">Gray 50</span>
<span class="t" style="left:629.20px;top:9.12px;font-size:14.40px;line-height:14.40px;color:#f4f4f4;font-family:'DejaVu Sans','Liberation Sans',sans-serif;transform:scaleX(1.2280);">Gray 35</span>
<span class="t" style="left:736.35px;top:9.12px;font-size:14.40px;line-height:14.40px;color:#f4f4f4;font-family:'DejaVu Sans','Liberation Sans',sans-serif;transform:scaleX(1.2294);">Black</span>
<span class="t" style="left:812.50px;top:9.12px;font-size:14.40px;line-height:14.40px;color:#f4f4f4;font-family:'DejaVu Sans','Liberation Sans',sans-serif;transform:scaleX(1.2255);">Dark Skin</span>
<span class="t" style="left:913.00px;top:9.12px;font-size:14.40px;line-height:14.40px;color:#f4f4f4;font-family:'DejaVu Sans','Liberation Sans',sans-serif;transform:scaleX(1.2176);">Light Skin</span>
<span class="t" style="left:1020.10px;top:9.12px;font-size:14.40px;line-height:14.40px;color:#f4f4f4;font-family:'DejaVu Sans','Liberation Sans',sans-serif;transform:scaleX(1.2175);">Blue Sky</span>
<span class="t" style="left:1126.75px;top:9.12px;font-size:14.40px;line-height:14.40px;color:#f4f4f4;font-family:'DejaVu Sans','Liberation Sans',sans-serif;transform:scaleX(1.2547);">Foliage</span>
<span class="t" style="left:1215.05px;top:9.12px;font-size:14.40px;line-height:14.40px;color:#f4f4f4;font-family:'DejaVu Sans','Liberation Sans',sans-serif;transform:scaleX(1.2831);">Blue Flower</span>
<span class="t" style="left:1334.20px;top:9.12px;font-size:14.40px;line-height:14.40px;color:#f4f4f4;font-family:'DejaVu Sans','Liberation Sans',sans-serif;transform:scaleX(1.2655);">Bluish Green</span>
<span class="t" style="left:1473.40px;top:9.12px;font-size:14.40px;line-height:14.40px;color:#f4f4f4;font-family:'DejaVu Sans','Liberation Sans',sans-serif;transform:scaleX(1.2517);">Orange</span>
<span class="t" style="left:16.60px;top:38.16px;font-size:15.30px;line-height:15.30px;color:#f4f4f4;font-weight:bold;font-family:'DejaVu Sans','Liberation Sans',sans-serif;transform:scaleX(1.1840);">x: CIE31</span>
<span class="t" style="left:190.30px;top:37.99px;font-size:15.50px;line-height:15.50px;color:#f4f4f4;font-family:'DejaVu Sans','Liberation Sans',sans-serif;transform:scaleX(1.2200);">0.3113</span>
<span class="t" style="left:304.00px;top:37.99px;font-size:15.50px;line-height:15.50px;color:#f4f4f4;font-family:'DejaVu Sans','Liberation Sans',sans-serif;transform:scaleX(1.2200);">0.3103</span>
<span class="t" style="left:417.40px;top:37.99px;font-size:15.50px;line-height:15.50px;color:#f4f4f4;font-family:'DejaVu Sans','Liberation Sans',sans-serif;transform:scaleX(1.2200);">0.3106</span>
<span class="t" style="left:518.60px;top:37.99px;font-size:15.50px;line-height:15.50px;color:#f4f4f4;font-family:'DejaVu Sans','Liberation Sans',sans-serif;transform:scaleX(1.2200);">0.3105</span>
<span class="t" style="left:619.60px;top:37.99px;font-size:15.50px;line-height:15.50px;color:#f4f4f4;font-family:'DejaVu Sans','Liberation Sans',sans-serif;transform:scaleX(1.2200);">0.3114</span>
<span class="t" style="left:720.60px;top:37.99px;font-size:15.50px;line-height:15.50px;color:#f4f4f4;font-family:'DejaVu Sans','Liberation Sans',sans-serif;transform:scaleX(1.2200);">0.2977</span>
<span class="t" style="left:810.30px;top:37.99px;font-size:15.50px;line-height:15.50px;color:#f4f4f4;font-family:'DejaVu Sans','Liberation Sans',sans-serif;transform:scaleX(1.2200);">0.4010</span>
<span class="t" style="left:911.10px;top:37.99px;font-size:15.50px;line-height:15.50px;color:#f4f4f4;font-family:'DejaVu Sans','Liberation Sans',sans-serif;transform:scaleX(1.2200);">0.3756</span>
<span class="t" style="left:1012.40px;top:37.99px;font-size:15.50px;line-height:15.50px;color:#f4f4f4;font-family:'DejaVu Sans','Liberation Sans',sans-serif;transform:scaleX(1.2200);">0.2342</span>
<span class="t" style="left:1114.00px;top:37.99px;font-size:15.50px;line-height:15.50px;color:#f4f4f4;font-family:'DejaVu Sans','Liberation Sans',sans-serif;transform:scaleX(1.2200);">0.3414</span>
<span class="t" style="left:1215.30px;top:37.99px;font-size:15.50px;line-height:15.50px;color:#f4f4f4;font-family:'DejaVu Sans','Liberation Sans',sans-serif;transform:scaleX(1.2200);">0.2594</span>
<span class="t" style="left:1334.40px;top:37.99px;font-size:15.50px;line-height:15.50px;color:#f4f4f4;font-family:'DejaVu Sans','Liberation Sans',sans-serif;transform:scaleX(1.2200);">0.2547</span>
<span class="t" style="left:1461.90px;top:37.99px;font-size:15.50px;line-height:15.50px;color:#f4f4f4;font-family:'DejaVu Sans','Liberation Sans',sans-serif;transform:scaleX(1.2200);">0.5360</span>
<span class="t" style="left:16.60px;top:64.84px;font-size:15.30px;line-height:15.30px;color:#f4f4f4;font-weight:bold;font-family:'DejaVu Sans','Liberation Sans',sans-serif;transform:scaleX(1.1840);">y: CIE31</span>
<span class="t" style="left:190.30px;top:64.67px;font-size:15.50px;line-height:15.50px;color:#f4f4f4;font-family:'DejaVu Sans','Liberation Sans',sans-serif;transform:scaleX(1.2200);">0.3288</span>
<span class="t" style="left:304.00px;top:64.67px;font-size:15.50px;line-height:15.50px;color:#f4f4f4;font-family:'DejaVu Sans','Liberation Sans',sans-serif;transform:scaleX(1.2200);">0.3284</span>
<span class="t" style="left:417.40px;top:64.67px;font-size:15.50px;line-height:15.50px;color:#f4f4f4;font-family:'DejaVu Sans','Liberation Sans',sans-serif;transform:scaleX(1.2200);">0.3283</span>
<span class="t" style="left:518.60px;top:64.67px;font-size:15.50px;line-height:15.50px;color:#f4f4f4;font-family:'DejaVu Sans','Liberation Sans',sans-serif;transform:scaleX(1.2200);">0.3282</span>
<span class="t" style="left:619.60px;top:64.67px;font-size:15.50px;line-height:15.50px;color:#f4f4f4;font-family:'DejaVu Sans','Liberation Sans',sans-serif;transform:scaleX(1.2200);">0.3287</span>
<span class="t" style="left:720.60px;top:64.67px;font-size:15.50px;line-height:15.50px;color:#f4f4f4;font-family:'DejaVu Sans','Liberation Sans',sans-serif;transform:scaleX(1.2200);">0.1556</span>
<span class="t" style="left:810.30px;top:64.67px;font-size:15.50px;line-height:15.50px;color:#f4f4f4;font-family:'DejaVu Sans','Liberation Sans',sans-serif;transform:scaleX(1.2200);">0.3632</span>
<span class="t" style="left:911.10px;top:64.67px;font-size:15.50px;line-height:15.50px;color:#f4f4f4;font-family:'DejaVu Sans','Liberation Sans',sans-serif;transform:scaleX(1.2200);">0.3542</span>
<span class="t" style="left:1012.40px;top:64.67px;font-size:15.50px;line-height:15.50px;color:#f4f4f4;font-family:'DejaVu Sans','Liberation Sans',sans-serif;transform:scaleX(1.2200);">0.2504</span>
<span class="t" style="left:1114.00px;top:64.67px;font-size:15.50px;line-height:15.50px;color:#f4f4f4;font-family:'DejaVu Sans','Liberation Sans',sans-serif;transform:scaleX(1.2200);">0.4370</span>
<span class="t" style="left:1215.30px;top:64.67px;font-size:15.50px;line-height:15.50px;color:#f4f4f4;font-family:'DejaVu Sans','Liberation Sans',sans-serif;transform:scaleX(1.2200);">0.2366</span>
<span class="t" style="left:1334.40px;top:64.67px;font-size:15.50px;line-height:15.50px;color:#f4f4f4;font-family:'DejaVu Sans','Liberation Sans',sans-serif;transform:scaleX(1.2200);">0.3699</span>
<span class="t" style="left:1461.90px;top:64.67px;font-size:15.50px;line-height:15.50px;color:#f4f4f4;font-family:'DejaVu Sans','Liberation Sans',sans-serif;transform:scaleX(1.2200);">0.4082</span>
<span class="t" style="left:16.60px;top:91.52px;font-size:15.30px;line-height:15.30px;color:#f4f4f4;font-weight:bold;font-family:'DejaVu Sans','Liberation Sans',sans-serif;transform:scaleX(1.1840);">Y</span>
<span class="t" style="left:190.30px;top:91.35px;font-size:15.50px;line-height:15.50px;color:#f4f4f4;font-family:'DejaVu Sans','Liberation Sans',sans-serif;transform:scaleX(1.2200);">1269.5740</span>
<span class="t" style="left:304.00px;top:91.35px;font-size:15.50px;line-height:15.50px;color:#f4f4f4;font-family:'DejaVu Sans','Liberation Sans',sans-serif;transform:scaleX(1.2200);">1011.2711</span>
<span class="t" style="left:417.40px;top:91.35px;font-size:15.50px;line-height:15.50px;color:#f4f4f4;font-family:'DejaVu Sans','Liberation Sans',sans-serif;transform:scaleX(1.2200);">822.5392</span>
<span class="t" style="left:518.60px;top:91.35px;font-size:15.50px;line-height:15.50px;color:#f4f4f4;font-family:'DejaVu Sans','Liberation Sans',sans-serif;transform:scaleX(1.2200);">635.8809</span>
<span class="t" style="left:619.60px;top:91.35px;font-size:15.50px;line-height:15.50px;color:#f4f4f4;font-family:'DejaVu Sans','Liberation Sans',sans-serif;transform:scaleX(1.2200);">443.0708</span>
<span class="t" style="left:720.60px;top:91.35px;font-size:15.50px;line-height:15.50px;color:#f4f4f4;font-family:'DejaVu Sans','Liberation Sans',sans-serif;transform:scaleX(1.2200);">0.0095</span>
<span class="t" style="left:810.30px;top:91.35px;font-size:15.50px;line-height:15.50px;color:#f4f4f4;font-family:'DejaVu Sans','Liberation Sans',sans-serif;transform:scaleX(1.2200);">126.8444</span>
<span class="t" style="left:911.10px;top:91.35px;font-size:15.50px;line-height:15.50px;color:#f4f4f4;font-family:'DejaVu Sans','Liberation Sans',sans-serif;transform:scaleX(1.2200);">454.7665</span>
<span class="t" style="left:1012.40px;top:91.35px;font-size:15.50px;line-height:15.50px;color:#f4f4f4;font-family:'DejaVu Sans','Liberation Sans',sans-serif;transform:scaleX(1.2200);">241.3178</span>
<span class="t" style="left:1114.00px;top:91.35px;font-size:15.50px;line-height:15.50px;color:#f4f4f4;font-family:'DejaVu Sans','Liberation Sans',sans-serif;transform:scaleX(1.2200);">174.4442</span>
<span class="t" style="left:1215.30px;top:91.35px;font-size:15.50px;line-height:15.50px;color:#f4f4f4;font-family:'DejaVu Sans','Liberation Sans',sans-serif;transform:scaleX(1.2200);">294.0496</span>
<span class="t" style="left:1334.40px;top:91.35px;font-size:15.50px;line-height:15.50px;color:#f4f4f4;font-family:'DejaVu Sans','Liberation Sans',sans-serif;transform:scaleX(1.2200);">577.4377</span>
<span class="t" style="left:1461.90px;top:91.35px;font-size:15.50px;line-height:15.50px;color:#f4f4f4;font-family:'DejaVu Sans','Liberation Sans',sans-serif;transform:scaleX(1.2200);">339.8729</span>
<span class="t" style="left:16.60px;top:118.20px;font-size:15.30px;line-height:15.30px;color:#f4f4f4;font-weight:bold;font-family:'DejaVu Sans','Liberation Sans',sans-serif;transform:scaleX(1.1840);">Target x:CIE31</span>
<span class="t" style="left:190.30px;top:118.03px;font-size:15.50px;line-height:15.50px;color:#f4f4f4;font-family:'DejaVu Sans','Liberation Sans',sans-serif;transform:scaleX(1.2200);">0.3127</span>
<span class="t" style="left:304.00px;top:118.03px;font-size:15.50px;line-height:15.50px;color:#f4f4f4;font-family:'DejaVu Sans','Liberation Sans',sans-serif;transform:scaleX(1.2200);">0.3127</span>
<span class="t" style="left:417.40px;top:118.03px;font-size:15.50px;line-height:15.50px;color:#f4f4f4;font-family:'DejaVu Sans','Liberation Sans',sans-serif;transform:scaleX(1.2200);">0.3127</span>
<span class="t" style="left:518.60px;top:118.03px;font-size:15.50px;line-height:15.50px;color:#f4f4f4;font-family:'DejaVu Sans','Liberation Sans',sans-serif;transform:scaleX(1.2200);">0.3127</span>
<span class="t" style="left:619.60px;top:118.03px;font-size:15.50px;line-height:15.50px;color:#f4f4f4;font-family:'DejaVu Sans','Liberation Sans',sans-serif;transform:scaleX(1.2200);">0.3127</span>
<span class="t" style="left:720.60px;top:118.03px;font-size:15.50px;line-height:15.50px;color:#f4f4f4;font-family:'DejaVu Sans','Liberation Sans',sans-serif;transform:scaleX(1.2200);">0.3127</span>
<span class="t" style="left:810.30px;top:118.03px;font-size:15.50px;line-height:15.50px;color:#f4f4f4;font-family:'DejaVu Sans','Liberation Sans',sans-serif;transform:scaleX(1.2200);">0.4003</span>
<span class="t" style="left:911.10px;top:118.03px;font-size:15.50px;line-height:15.50px;color:#f4f4f4;font-family:'DejaVu Sans','Liberation Sans',sans-serif;transform:scaleX(1.2200);">0.3795</span>
<span class="t" style="left:1012.40px;top:118.03px;font-size:15.50px;line-height:15.50px;color:#f4f4f4;font-family:'DejaVu Sans','Liberation Sans',sans-serif;transform:scaleX(1.2200);">0.2496</span>
<span class="t" style="left:1114.00px;top:118.03px;font-size:15.50px;line-height:15.50px;color:#f4f4f4;font-family:'DejaVu Sans','Liberation Sans',sans-serif;transform:scaleX(1.2200);">0.3395</span>
<span class="t" style="left:1215.30px;top:118.03px;font-size:15.50px;line-height:15.50px;color:#f4f4f4;font-family:'DejaVu Sans','Liberation Sans',sans-serif;transform:scaleX(1.2200);">0.2681</span>
<span class="t" style="left:1334.40px;top:118.03px;font-size:15.50px;line-height:15.50px;color:#f4f4f4;font-family:'DejaVu Sans','Liberation Sans',sans-serif;transform:scaleX(1.2200);">0.2626</span>
<span class="t" style="left:1461.90px;top:118.03px;font-size:15.50px;line-height:15.50px;color:#f4f4f4;font-family:'DejaVu Sans','Liberation Sans',sans-serif;transform:scaleX(1.2200);">0.5122</span>
<span class="t" style="left:16.60px;top:144.88px;font-size:15.30px;line-height:15.30px;color:#f4f4f4;font-weight:bold;font-family:'DejaVu Sans','Liberation Sans',sans-serif;transform:scaleX(1.1840);">Target y:CIE31</span>
<span class="t" style="left:190.30px;top:144.71px;font-size:15.50px;line-height:15.50px;color:#f4f4f4;font-family:'DejaVu Sans','Liberation Sans',sans-serif;transform:scaleX(1.2200);">0.3290</span>
<span class="t" style="left:304.00px;top:144.71px;font-size:15.50px;line-height:15.50px;color:#f4f4f4;font-family:'DejaVu Sans','Liberation Sans',sans-serif;transform:scaleX(1.2200);">0.3290</span>
<span class="t" style="left:417.40px;top:144.71px;font-size:15.50px;line-height:15.50px;color:#f4f4f4;font-family:'DejaVu Sans','Liberation Sans',sans-serif;transform:scaleX(1.2200);">0.3290</span>
<span class="t" style="left:518.60px;top:144.71px;font-size:15.50px;line-height:15.50px;color:#f4f4f4;font-family:'DejaVu Sans','Liberation Sans',sans-serif;transform:scaleX(1.2200);">0.3290</span>
<span class="t" style="left:619.60px;top:144.71px;font-size:15.50px;line-height:15.50px;color:#f4f4f4;font-family:'DejaVu Sans','Liberation Sans',sans-serif;transform:scaleX(1.2200);">0.3290</span>
<span class="t" style="left:720.60px;top:144.71px;font-size:15.50px;line-height:15.50px;color:#f4f4f4;font-family:'DejaVu Sans','Liberation Sans',sans-serif;transform:scaleX(1.2200);">0.3290</span>
<span class="t" style="left:810.30px;top:144.71px;font-size:15.50px;line-height:15.50px;color:#f4f4f4;font-family:'DejaVu Sans','Liberation Sans',sans-serif;transform:scaleX(1.2200);">0.3642</span>
<span class="t" style="left:911.10px;top:144.71px;font-size:15.50px;line-height:15.50px;color:#f4f4f4;font-family:'DejaVu Sans','Liberation Sans',sans-serif;transform:scaleX(1.2200);">0.3562</span>
<span class="t" style="left:1012.40px;top:144.71px;font-size:15.50px;line-height:15.50px;color:#f4f4f4;font-family:'DejaVu Sans','Liberation Sans',sans-serif;transform:scaleX(1.2200);">0.2656</span>
<span class="t" style="left:1114.00px;top:144.71px;font-size:15.50px;line-height:15.50px;color:#f4f4f4;font-family:'DejaVu Sans','Liberation Sans',sans-serif;transform:scaleX(1.2200);">0.4271</span>
<span class="t" style="left:1215.30px;top:144.71px;font-size:15.50px;line-height:15.50px;color:#f4f4f4;font-family:'DejaVu Sans','Liberation Sans',sans-serif;transform:scaleX(1.2200);">0.2525</span>
<span class="t" style="left:1334.40px;top:144.71px;font-size:15.50px;line-height:15.50px;color:#f4f4f4;font-family:'DejaVu Sans','Liberation Sans',sans-serif;transform:scaleX(1.2200);">0.3616</span>
<span class="t" style="left:1461.90px;top:144.71px;font-size:15.50px;line-height:15.50px;color:#f4f4f4;font-family:'DejaVu Sans','Liberation Sans',sans-serif;transform:scaleX(1.2200);">0.4063</span>
<span class="t" style="left:16.60px;top:171.56px;font-size:15.30px;line-height:15.30px;color:#f4f4f4;font-weight:bold;font-family:'DejaVu Sans','Liberation Sans',sans-serif;transform:scaleX(1.1840);">Target Y</span>
<span class="t" style="left:190.30px;top:171.39px;font-size:15.50px;line-height:15.50px;color:#f4f4f4;font-family:'DejaVu Sans','Liberation Sans',sans-serif;transform:scaleX(1.2200);">1269.5740</span>
<span class="t" style="left:304.00px;top:171.39px;font-size:15.50px;line-height:15.50px;color:#f4f4f4;font-family:'DejaVu Sans','Liberation Sans',sans-serif;transform:scaleX(1.2200);">1004.6113</span>
<span class="t" style="left:417.40px;top:171.39px;font-size:15.50px;line-height:15.50px;color:#f4f4f4;font-family:'DejaVu Sans','Liberation Sans',sans-serif;transform:scaleX(1.2200);">809.4764</span>
<span class="t" style="left:518.60px;top:171.39px;font-size:15.50px;line-height:15.50px;color:#f4f4f4;font-family:'DejaVu Sans','Liberation Sans',sans-serif;transform:scaleX(1.2200);">623.3873</span>
<span class="t" style="left:619.60px;top:171.39px;font-size:15.50px;line-height:15.50px;color:#f4f4f4;font-family:'DejaVu Sans','Liberation Sans',sans-serif;transform:scaleX(1.2200);">434.0857</span>
<span class="t" style="left:720.60px;top:171.39px;font-size:15.50px;line-height:15.50px;color:#f4f4f4;font-family:'DejaVu Sans','Liberation Sans',sans-serif;transform:scaleX(1.2200);">0.0000</span>
<span class="t" style="left:810.30px;top:171.39px;font-size:15.50px;line-height:15.50px;color:#f4f4f4;font-family:'DejaVu Sans','Liberation Sans',sans-serif;transform:scaleX(1.2200);">127.8880</span>
<span class="t" style="left:911.10px;top:171.39px;font-size:15.50px;line-height:15.50px;color:#f4f4f4;font-family:'DejaVu Sans','Liberation Sans',sans-serif;transform:scaleX(1.2200);">443.0199</span>
<span class="t" style="left:1012.40px;top:171.39px;font-size:15.50px;line-height:15.50px;color:#f4f4f4;font-family:'DejaVu Sans','Liberation Sans',sans-serif;transform:scaleX(1.2200);">237.3899</span>
<span class="t" style="left:1114.00px;top:171.39px;font-size:15.50px;line-height:15.50px;color:#f4f4f4;font-family:'DejaVu Sans','Liberation Sans',sans-serif;transform:scaleX(1.2200);">165.4567</span>
<span class="t" style="left:1215.30px;top:171.39px;font-size:15.50px;line-height:15.50px;color:#f4f4f4;font-family:'DejaVu Sans','Liberation Sans',sans-serif;transform:scaleX(1.2200);">296.0454</span>
<span class="t" style="left:1334.40px;top:171.39px;font-size:15.50px;line-height:15.50px;color:#f4f4f4;font-family:'DejaVu Sans','Liberation Sans',sans-serif;transform:scaleX(1.2200);">531.6089</span>
<span class="t" style="left:1461.90px;top:171.39px;font-size:15.50px;line-height:15.50px;color:#f4f4f4;font-family:'DejaVu Sans','Liberation Sans',sans-serif;transform:scaleX(1.2200);">359.8966</span>
<span class="t" style="left:16.60px;top:198.24px;font-size:15.30px;line-height:15.30px;color:#f4f4f4;font-weight:bold;font-family:'DejaVu Sans','Liberation Sans',sans-serif;transform:scaleX(1.1840);">ΔE 2000</span>
<span class="t" style="left:190.30px;top:198.07px;font-size:15.50px;line-height:15.50px;color:#f4f4f4;font-family:'DejaVu Sans','Liberation Sans',sans-serif;transform:scaleX(1.2200);">0.9852</span>
<span class="t" style="left:304.00px;top:198.07px;font-size:15.50px;line-height:15.50px;color:#f4f4f4;font-family:'DejaVu Sans','Liberation Sans',sans-serif;transform:scaleX(1.2200);">1.4638</span>
<span class="t" style="left:417.40px;top:198.07px;font-size:15.50px;line-height:15.50px;color:#f4f4f4;font-family:'DejaVu Sans','Liberation Sans',sans-serif;transform:scaleX(1.2200);">1.2012</span>
<span class="t" style="left:518.60px;top:198.07px;font-size:15.50px;line-height:15.50px;color:#f4f4f4;font-family:'DejaVu Sans','Liberation Sans',sans-serif;transform:scaleX(1.2200);">1.1560</span>
<span class="t" style="left:619.60px;top:198.07px;font-size:15.50px;line-height:15.50px;color:#f4f4f4;font-family:'DejaVu Sans','Liberation Sans',sans-serif;transform:scaleX(1.2200);">0.7539</span>
<span class="t" style="left:720.60px;top:198.07px;font-size:15.50px;line-height:15.50px;color:#f4f4f4;font-family:'DejaVu Sans','Liberation Sans',sans-serif;transform:scaleX(1.2200);">0.0515</span>
<span class="t" style="left:810.30px;top:198.07px;font-size:15.50px;line-height:15.50px;color:#f4f4f4;font-family:'DejaVu Sans','Liberation Sans',sans-serif;transform:scaleX(1.2200);">0.3889</span>
<span class="t" style="left:911.10px;top:198.07px;font-size:15.50px;line-height:15.50px;color:#f4f4f4;font-family:'DejaVu Sans','Liberation Sans',sans-serif;transform:scaleX(1.2200);">0.8344</span>
<span class="t" style="left:1012.40px;top:198.07px;font-size:15.50px;line-height:15.50px;color:#f4f4f4;font-family:'DejaVu Sans','Liberation Sans',sans-serif;transform:scaleX(1.2200);">2.8344</span>
<span class="t" style="left:1114.00px;top:198.07px;font-size:15.50px;line-height:15.50px;color:#f4f4f4;font-family:'DejaVu Sans','Liberation Sans',sans-serif;transform:scaleX(1.2200);">1.6547</span>
<span class="t" style="left:1215.30px;top:198.07px;font-size:15.50px;line-height:15.50px;color:#f4f4f4;font-family:'DejaVu Sans','Liberation Sans',sans-serif;transform:scaleX(1.2200);">2.6169</span>
<span class="t" style="left:1334.40px;top:198.07px;font-size:15.50px;line-height:15.50px;color:#f4f4f4;font-family:'DejaVu Sans','Liberation Sans',sans-serif;transform:scaleX(1.2200);">3.3401</span>
<span class="t" style="left:1461.90px;top:198.07px;font-size:15.50px;line-height:15.50px;color:#f4f4f4;font-family:'DejaVu Sans','Liberation Sans',sans-serif;transform:scaleX(1.2200);">2.4873</span>
<span class="t" style="left:16.60px;top:224.92px;font-size:15.30px;line-height:15.30px;color:#f4f4f4;font-weight:bold;font-family:'DejaVu Sans','Liberation Sans',sans-serif;transform:scaleX(1.1840);">ΔE ITP</span>
<span class="t" style="left:190.30px;top:224.75px;font-size:15.50px;line-height:15.50px;color:#f4f4f4;font-family:'DejaVu Sans','Liberation Sans',sans-serif;transform:scaleX(1.2200);">0.9305</span>
<span class="t" style="left:304.00px;top:224.75px;font-size:15.50px;line-height:15.50px;color:#f4f4f4;font-family:'DejaVu Sans','Liberation Sans',sans-serif;transform:scaleX(1.2200);">1.6657</span>
<span class="t" style="left:417.40px;top:224.75px;font-size:15.50px;line-height:15.50px;color:#f4f4f4;font-family:'DejaVu Sans','Liberation Sans',sans-serif;transform:scaleX(1.2200);">1.8494</span>
<span class="t" style="left:518.60px;top:224.75px;font-size:15.50px;line-height:15.50px;color:#f4f4f4;font-family:'DejaVu Sans','Liberation Sans',sans-serif;transform:scaleX(1.2200);">2.0890</span>
<span class="t" style="left:619.60px;top:224.75px;font-size:15.50px;line-height:15.50px;color:#f4f4f4;font-family:'DejaVu Sans','Liberation Sans',sans-serif;transform:scaleX(1.2200);">1.7864</span>
<span class="t" style="left:720.60px;top:224.75px;font-size:15.50px;line-height:15.50px;color:#f4f4f4;font-family:'DejaVu Sans','Liberation Sans',sans-serif;transform:scaleX(1.2200);">20.3963</span>
<span class="t" style="left:810.30px;top:224.75px;font-size:15.50px;line-height:15.50px;color:#f4f4f4;font-family:'DejaVu Sans','Liberation Sans',sans-serif;transform:scaleX(1.2200);">1.0260</span>
<span class="t" style="left:911.10px;top:224.75px;font-size:15.50px;line-height:15.50px;color:#f4f4f4;font-family:'DejaVu Sans','Liberation Sans',sans-serif;transform:scaleX(1.2200);">3.0220</span>
<span class="t" style="left:1012.40px;top:224.75px;font-size:15.50px;line-height:15.50px;color:#f4f4f4;font-family:'DejaVu Sans','Liberation Sans',sans-serif;transform:scaleX(1.2200);">11.3682</span>
<span class="t" style="left:1114.00px;top:224.75px;font-size:15.50px;line-height:15.50px;color:#f4f4f4;font-family:'DejaVu Sans','Liberation Sans',sans-serif;transform:scaleX(1.2200);">5.6970</span>
<span class="t" style="left:1215.30px;top:224.75px;font-size:15.50px;line-height:15.50px;color:#f4f4f4;font-family:'DejaVu Sans','Liberation Sans',sans-serif;transform:scaleX(1.2200);">7.0066</span>
<span class="t" style="left:1334.40px;top:224.75px;font-size:15.50px;line-height:15.50px;color:#f4f4f4;font-family:'DejaVu Sans','Liberation Sans',sans-serif;transform:scaleX(1.2200);">9.2450</span>
<span class="t" style="left:1461.90px;top:224.75px;font-size:15.50px;line-height:15.50px;color:#f4f4f4;font-family:'DejaVu Sans','Liberation Sans',sans-serif;transform:scaleX(1.2200);">18.1133</span>
</div>
<div class="a" style="left:371px;top:901.8px;width:1546.5px;height:16.5px;background:#595959"></div>
<div class="a" style="left:372.7px;top:903px;width:19px;height:14.5px;border-radius:3px;background:#797979"></div>
<div class="a" style="left:1898.5px;top:902.5px;width:16.5px;height:15px;border-radius:3px;background:#7a7a7a"></div>
<div class="a" style="left:378.5px;top:905.7px;width:0;height:0;border-top:4.5px solid transparent;border-bottom:4.5px solid transparent;border-right:7.5px solid #333"></div>
<div class="a" style="left:1904px;top:905.5px;width:0;height:0;border-top:4.5px solid transparent;border-bottom:4.5px solid transparent;border-left:7px solid #3a3a3a"></div>
<div class="a" style="left:395.3px;top:903.3px;width:829px;height:14px;border-radius:7px;background:#434343"></div>
<div class="btn" style="left:1.1px;"><s style="background:#ffffff;height:35.2px;"></s></div>
<span class="t" style="left:18.94px;top:1117.04px;font-size:10.70px;line-height:10.70px;color:#2b2b2b;font-weight:bold;">White</span>
<div class="btn" style="left:68.0px;"><s style="background:#e6e6e6;height:35.2px;"></s></div>
<span class="t" style="left:80.73px;top:1117.04px;font-size:10.70px;line-height:10.70px;color:#2b2b2b;font-weight:bold;">Gray 80</span>
<div class="btn" style="left:134.8px;"><s style="background:#d1d1d1;height:35.2px;"></s></div>
<span class="t" style="left:147.59px;top:1117.04px;font-size:10.70px;line-height:10.70px;color:#2b2b2b;font-weight:bold;">Gray 65</span>
<div class="btn" style="left:201.7px;"><s style="background:#bababa;height:35.2px;"></s></div>
<span class="t" style="left:214.45px;top:1117.04px;font-size:10.70px;line-height:10.70px;color:#2b2b2b;font-weight:bold;">Gray 50</span>
<div class="btn" style="left:268.5px;"><s style="background:#9e9e9e;height:35.2px;"></s></div>
<span class="t" style="left:281.31px;top:1117.04px;font-size:10.70px;line-height:10.70px;color:#2b2b2b;font-weight:bold;">Gray 35</span>
<div class="btn" style="left:335.4px;"><s style="background:#000000;height:35.2px;"></s></div>
<span class="t" style="left:353.52px;top:1117.04px;font-size:10.70px;line-height:10.70px;color:#2b2b2b;font-weight:bold;">Black</span>
<div class="btn" style="left:402.3px;"><s style="background:#735244;height:35.2px;"></s></div>
<span class="t" style="left:409.98px;top:1117.04px;font-size:10.70px;line-height:10.70px;color:#2b2b2b;font-weight:bold;">Dark Skin</span>
<div class="btn" style="left:469.1px;"><s style="background:#c29682;height:35.2px;"></s></div>
<span class="t" style="left:475.66px;top:1117.04px;font-size:10.70px;line-height:10.70px;color:#2b2b2b;font-weight:bold;">Light Skin</span>
<div class="btn" style="left:536.0px;"><s style="background:#627a9d;height:35.2px;"></s></div>
<span class="t" style="left:545.78px;top:1117.04px;font-size:10.70px;line-height:10.70px;color:#2b2b2b;font-weight:bold;">Blue Sky</span>
<div class="btn" style="left:602.8px;"><s style="background:#576c43;height:35.2px;"></s></div>
<span class="t" style="left:616.51px;top:1117.04px;font-size:10.70px;line-height:10.70px;color:#2b2b2b;font-weight:bold;">Foliage</span>
<div class="btn" style="left:669.7px;"><s style="background:#8580b1;height:35.2px;"></s></div>
<span class="t" style="left:671.78px;top:1117.04px;font-size:10.70px;line-height:10.70px;color:#2b2b2b;font-weight:bold;">Blue Flower</span>
<div class="btn" style="left:736.6px;"><s style="background:#67bdaa;height:35.2px;"></s></div>
<span class="t" style="left:737.21px;top:1117.04px;font-size:10.70px;line-height:10.70px;color:#2b2b2b;font-weight:bold;transform:scaleX(0.9535);">Bluish Green</span>
<div class="btn" style="left:803.4px;"><s style="background:#d67e2c;height:35.2px;"></s></div>
<span class="t" style="left:817.09px;top:1117.04px;font-size:10.70px;line-height:10.70px;color:#2b2b2b;font-weight:bold;">Orange</span>
<div class="btn" style="left:870.3px;"><s style="background:#505ba6;height:35.2px;"></s></div>
<span class="t" style="left:870.93px;top:1117.04px;font-size:10.70px;line-height:10.70px;color:#2b2b2b;font-weight:bold;transform:scaleX(0.9207);">Purplish Blue</span>
<div class="btn" style="left:937.1px;"><s style="background:#c15a63;height:22.3px;"></s></div>
<span class="t" style="left:945.76px;top:1105.64px;font-size:10.70px;line-height:10.70px;color:#2b2b2b;font-weight:bold;">Moderate</span>
<span class="t" style="left:945.76px;top:1117.24px;font-size:10.70px;line-height:10.70px;color:#2b2b2b;font-weight:bold;">Red</span>
<div class="btn" style="left:1004.0px;"><s style="background:#5e3c6c;height:35.2px;"></s></div>
<span class="t" style="left:1019.75px;top:1117.04px;font-size:10.70px;line-height:10.70px;color:#2b2b2b;font-weight:bold;">Purple</span>
<div class="btn" style="left:1070.9px;"><s style="background:#9dbc40;height:35.2px;"></s></div>
<span class="t" style="left:1071.51px;top:1117.04px;font-size:10.70px;line-height:10.70px;color:#2b2b2b;font-weight:bold;transform:scaleX(0.9449);">Yellow Green</span>
<div class="btn" style="left:1137.7px;"><s style="background:#e0a32e;height:22.3px;"></s></div>
<span class="t" style="left:1151.39px;top:1105.64px;font-size:10.70px;line-height:10.70px;color:#2b2b2b;font-weight:bold;">Orange</span>
<span class="t" style="left:1151.39px;top:1117.24px;font-size:10.70px;line-height:10.70px;color:#2b2b2b;font-weight:bold;">Yellow</span>
<div class="btn" style="left:1204.6px;"><s style="background:#383d96;height:35.2px;"></s></div>
<span class="t" style="left:1225.39px;top:1117.04px;font-size:10.70px;line-height:10.70px;color:#2b2b2b;font-weight:bold;">Blue</span>
<div class="btn" style="left:1271.4px;"><s style="background:#469449;height:35.2px;"></s></div>
<span class="t" style="left:1288.38px;top:1117.04px;font-size:10.70px;line-height:10.70px;color:#2b2b2b;font-weight:bold;">Green</span>
<div class="btn" style="left:1338.3px;"><s style="background:#af363c;height:35.2px;"></s></div>
<span class="t" style="left:1360.59px;top:1117.04px;font-size:10.70px;line-height:10.70px;color:#2b2b2b;font-weight:bold;">Red</span>
<div class="btn" style="left:1405.2px;"><s style="background:#e7c71f;height:35.2px;"></s></div>
<span class="t" style="left:1420.91px;top:1117.04px;font-size:10.70px;line-height:10.70px;color:#2b2b2b;font-weight:bold;">Yellow</span>
<div class="btn" style="left:1472.0px;"><s style="background:#bb5695;height:35.2px;"></s></div>
<span class="t" style="left:1482.72px;top:1117.04px;font-size:10.70px;line-height:10.70px;color:#2b2b2b;font-weight:bold;">Magenta</span>
<div class="btn" style="left:1538.9px;background:#272727;"><s style="background:#0885a1;height:35.2px;box-shadow:none;"></s></div>
<span class="t" style="left:1558.20px;top:1117.04px;font-size:10.70px;line-height:10.70px;color:#fff;font-weight:bold;">Cyan</span>
<div class="a" style="left:1606.5px;top:1086px;width:46.5px;height:45.5px;border-radius:4px;background:linear-gradient(#8c8c8c,#5e5e5e)"></div>
<div class="a" style="left:1614.6px;top:1095.4px;width:26px;height:24.8px;border:2.2px solid #262626;border-radius:4.5px;background:linear-gradient(#b4b4b4,#8a8a8a)"><div class="a" style="left:6.5px;top:6.2px;width:12.6px;height:13.3px;background:#000"></div></div>
<div class="a" style="left:1654.5px;top:1072.3px;width:264px;height:29px;border-radius:4px;background:linear-gradient(#a2a2a2,#808080 55%,#666)"></div>
<div class="a" style="left:1830px;top:1072.3px;width:44px;height:29px;background:linear-gradient(#3a3a3a,#262626)"></div>
<div class="a" style="left:1698.7px;top:1072.3px;width:1.2px;height:29px;background:#4e4e4e"></div>
<div class="a" style="left:1742.7px;top:1072.3px;width:1.2px;height:29px;background:#4e4e4e"></div>
<div class="a" style="left:1786.7px;top:1072.3px;width:1.2px;height:29px;background:#4e4e4e"></div>
<div class="a" style="left:1830.7px;top:1072.3px;width:1.2px;height:29px;background:#4e4e4e"></div>
<div class="a" style="left:1874.7px;top:1072.3px;width:1.2px;height:29px;background:#4e4e4e"></div>
<div class="a" style="left:1667.7px;top:1080px;width:18px;height:18px;border-radius:9px;background:radial-gradient(rgba(40,40,40,.55),rgba(70,70,70,.35) 70%,rgba(90,90,90,0))"></div>
<div class="a" style="left:1711.7px;top:1080px;width:18px;height:18px;border-radius:9px;background:radial-gradient(rgba(40,40,40,.55),rgba(70,70,70,.35) 70%,rgba(90,90,90,0))"></div>
<div class="a" style="left:1755.7px;top:1080px;width:18px;height:18px;border-radius:9px;background:radial-gradient(rgba(40,40,40,.55),rgba(70,70,70,.35) 70%,rgba(90,90,90,0))"></div>
<div class="a" style="left:1799.7px;top:1080px;width:18px;height:18px;border-radius:9px;background:radial-gradient(rgba(40,40,40,.55),rgba(70,70,70,.35) 70%,rgba(90,90,90,0))"></div>
<div class="a" style="left:1843.7px;top:1080px;width:18px;height:18px;border-radius:9px;background:radial-gradient(rgba(40,40,40,.55),rgba(70,70,70,.35) 70%,rgba(90,90,90,0))"></div>
<div class="a" style="left:1887.7px;top:1080px;width:18px;height:18px;border-radius:9px;background:radial-gradient(rgba(40,40,40,.55),rgba(70,70,70,.35) 70%,rgba(90,90,90,0))"></div>
<div class="a" style="left:1654.5px;top:1102.3px;width:264px;height:29px;border-radius:4px;background:linear-gradient(#aaa,#909090 50%,#6c6c6c);box-shadow:inset 0 0 0 1px rgba(70,70,70,.5)"></div>
<div class="a" style="left:1785.8px;top:1102.3px;width:1.4px;height:29px;background:#4e4e4e"></div>
<div class="a" style="left:1675px;top:1107.5px;width:19px;height:19px;border-radius:10px;background:linear-gradient(#8a8a8a,#a8a8a8)"></div>
<div class="a" style="left:1881.3px;top:1107.5px;width:19px;height:19px;border-radius:10px;background:linear-gradient(#8a8a8a,#a8a8a8)"></div>
<span class="t" style="left:1678.70px;top:1107.19px;font-size:17.50px;line-height:17.50px;color:#2e2e2e;transform:scaleX(1.1815);">«</span>
<span class="t" style="left:1885.30px;top:1107.19px;font-size:17.50px;line-height:17.50px;color:#2e2e2e;transform:scaleX(1.1815);">»</span>
<span class="t" style="left:1709.30px;top:1105.98px;font-size:22.00px;line-height:22.00px;color:#2b2b2b;transform:scaleX(1.0325);">Back</span>
<span class="t" style="left:1812.30px;top:1105.98px;font-size:22.00px;line-height:22.00px;color:#2b2b2b;transform:scaleX(1.1606);">Next</span>
<div class="a" style="left:1918.6px;top:641px;width:1.4px;height:492px;background:#262626"></div>

<svg id="ov" width="1920" height="1133" viewBox="0 0 1920 1133"><defs><linearGradient id="sh" x1="0" x2="1" y1="0" y2="0"><stop offset="0" stop-color="#fff" stop-opacity=".38"/><stop offset=".32" stop-color="#fff" stop-opacity="0"/><stop offset=".6" stop-color="#000" stop-opacity=".05"/><stop offset="1" stop-color="#000" stop-opacity=".5"/></linearGradient><linearGradient id="cy" x1="0" x2="0" y1="0" y2="1"><stop offset="0" stop-color="#5cb6ca"/><stop offset=".22" stop-color="#0389a7"/><stop offset=".5" stop-color="#0486a3"/><stop offset=".8" stop-color="#05607a"/><stop offset="1" stop-color="#013548"/></linearGradient></defs>
<rect x="23.6" y="209.0" width="384.9" height="381.0" fill="#232323"/>
<path d="M73.8 209.0V590.0M125.0 209.0V590.0M176.9 209.0V590.0M228.8 209.0V590.0M280.4 209.0V590.0M330.7 209.0V590.0M381.9 209.0V590.0" stroke="#949494" stroke-width="1.55" fill="none"/>
<rect x="24.4" y="209.5" width="59.4" height="11.8" fill="#000"/>
<rect x="24.6" y="210.6" width="58.0" height="9.6" fill="#0885a1"/>
<rect x="24.6" y="210.6" width="58.0" height="9.6" fill="url(#sh)"/>
<rect x="24.4" y="225.4" width="54.3" height="11.8" fill="#000"/>
<rect x="24.6" y="226.5" width="52.9" height="9.6" fill="#bb5695"/>
<rect x="24.6" y="226.5" width="52.9" height="9.6" fill="url(#sh)"/>
<rect x="24.4" y="241.4" width="64.8" height="11.8" fill="#000"/>
<rect x="24.6" y="242.5" width="63.4" height="9.6" fill="#e7c71f"/>
<rect x="24.6" y="242.5" width="63.4" height="9.6" fill="url(#sh)"/>
<rect x="24.4" y="257.3" width="30.4" height="11.8" fill="#000"/>
<rect x="24.6" y="258.4" width="29.0" height="9.6" fill="#af363c"/>
<rect x="24.6" y="258.4" width="29.0" height="9.6" fill="url(#sh)"/>
<rect x="24.4" y="273.2" width="123.4" height="11.8" fill="#000"/>
<rect x="24.6" y="274.3" width="122.0" height="9.6" fill="#469449"/>
<rect x="24.6" y="274.3" width="122.0" height="9.6" fill="url(#sh)"/>
<rect x="24.4" y="289.1" width="63.3" height="11.8" fill="#000"/>
<rect x="24.6" y="290.2" width="61.9" height="9.6" fill="#383d96"/>
<rect x="24.6" y="290.2" width="61.9" height="9.6" fill="url(#sh)"/>
<rect x="24.4" y="305.1" width="66.9" height="11.8" fill="#000"/>
<rect x="24.6" y="306.2" width="65.5" height="9.6" fill="#e0a32e"/>
<rect x="24.6" y="306.2" width="65.5" height="9.6" fill="url(#sh)"/>
<rect x="24.4" y="321.0" width="119.8" height="11.8" fill="#000"/>
<rect x="24.6" y="322.1" width="118.4" height="9.6" fill="#9dbc40"/>
<rect x="24.6" y="322.1" width="118.4" height="9.6" fill="url(#sh)"/>
<rect x="24.4" y="336.9" width="45.0" height="11.8" fill="#000"/>
<rect x="24.6" y="338.0" width="43.6" height="9.6" fill="#5e3c6c"/>
<rect x="24.6" y="338.0" width="43.6" height="9.6" fill="url(#sh)"/>
<rect x="24.4" y="352.9" width="22.7" height="11.8" fill="#000"/>
<rect x="24.6" y="354.0" width="21.3" height="9.6" fill="#c15a63"/>
<rect x="24.6" y="354.0" width="21.3" height="9.6" fill="url(#sh)"/>
<rect x="24.4" y="368.8" width="112.1" height="11.8" fill="#000"/>
<rect x="24.6" y="369.9" width="110.7" height="9.6" fill="#505ba6"/>
<rect x="24.6" y="369.9" width="110.7" height="9.6" fill="url(#sh)"/>
<rect x="24.4" y="384.7" width="62.2" height="11.8" fill="#000"/>
<rect x="24.6" y="385.8" width="60.8" height="9.6" fill="#d67e2c"/>
<rect x="24.6" y="385.8" width="60.8" height="9.6" fill="url(#sh)"/>
<rect x="24.4" y="400.7" width="84.1" height="11.8" fill="#000"/>
<rect x="24.6" y="401.8" width="82.7" height="9.6" fill="#67bdaa"/>
<rect x="24.6" y="401.8" width="82.7" height="9.6" fill="url(#sh)"/>
<rect x="24.4" y="416.6" width="65.5" height="11.8" fill="#000"/>
<rect x="24.6" y="417.7" width="64.1" height="9.6" fill="#8580b1"/>
<rect x="24.6" y="417.7" width="64.1" height="9.6" fill="url(#sh)"/>
<rect x="24.4" y="432.5" width="40.8" height="11.8" fill="#000"/>
<rect x="24.6" y="433.6" width="39.4" height="9.6" fill="#576c43"/>
<rect x="24.6" y="433.6" width="39.4" height="9.6" fill="url(#sh)"/>
<rect x="24.4" y="448.4" width="71.1" height="11.8" fill="#000"/>
<rect x="24.6" y="449.6" width="69.7" height="9.6" fill="#627a9d"/>
<rect x="24.6" y="449.6" width="69.7" height="9.6" fill="url(#sh)"/>
<rect x="24.4" y="464.4" width="19.7" height="11.8" fill="#000"/>
<rect x="24.6" y="465.5" width="18.3" height="9.6" fill="#c29682"/>
<rect x="24.6" y="465.5" width="18.3" height="9.6" fill="url(#sh)"/>
<rect x="24.4" y="480.3" width="8.3" height="11.8" fill="#000"/>
<rect x="24.6" y="481.4" width="6.9" height="9.6" fill="#735244"/>
<rect x="24.6" y="481.4" width="6.9" height="9.6" fill="url(#sh)"/>
<rect x="24.4" y="512.2" width="17.7" height="11.8" fill="#000"/>
<rect x="24.6" y="513.3" width="16.3" height="9.6" fill="#9e9e9e"/>
<rect x="24.6" y="513.3" width="16.3" height="9.6" fill="url(#sh)"/>
<rect x="24.4" y="528.1" width="28.0" height="11.8" fill="#000"/>
<rect x="24.6" y="529.2" width="26.6" height="9.6" fill="#bababa"/>
<rect x="24.6" y="529.2" width="26.6" height="9.6" fill="url(#sh)"/>
<rect x="24.4" y="544.0" width="29.1" height="11.8" fill="#000"/>
<rect x="24.6" y="545.1" width="27.7" height="9.6" fill="#d1d1d1"/>
<rect x="24.6" y="545.1" width="27.7" height="9.6" fill="url(#sh)"/>
<rect x="24.4" y="560.0" width="35.9" height="11.8" fill="#000"/>
<rect x="24.6" y="561.1" width="34.5" height="9.6" fill="#e6e6e6"/>
<rect x="24.6" y="561.1" width="34.5" height="9.6" fill="url(#sh)"/>
<rect x="24.4" y="575.9" width="23.6" height="11.8" fill="#000"/>
<rect x="24.6" y="577.0" width="22.2" height="9.6" fill="#ffffff"/>
<rect x="24.6" y="577.0" width="22.2" height="9.6" fill="url(#sh)"/>
<rect x="23.6" y="209.0" width="384.9" height="381.0" fill="none" stroke="#a2a2a2" stroke-width="1.75"/>
<text x="23.2" y="615.2" font-size="16.4" fill="#d8d8d8" text-anchor="middle">0</text>
<text x="73.4" y="615.2" font-size="16.4" fill="#d8d8d8" text-anchor="middle">2</text>
<text x="124.6" y="615.2" font-size="16.4" fill="#d8d8d8" text-anchor="middle">4</text>
<text x="176.5" y="615.2" font-size="16.4" fill="#d8d8d8" text-anchor="middle">6</text>
<text x="228.4" y="615.2" font-size="16.4" fill="#d8d8d8" text-anchor="middle">8</text>
<text x="280.6" y="615.2" font-size="16.4" fill="#d8d8d8" text-anchor="middle">10</text>
<text x="330.9" y="615.2" font-size="16.4" fill="#d8d8d8" text-anchor="middle">12</text>
<text x="382.1" y="615.2" font-size="16.4" fill="#d8d8d8" text-anchor="middle">14</text>
<path d="M23.6 590.0V596.5M73.8 590.0V596.5M125.0 590.0V596.5M176.9 590.0V596.5M228.8 590.0V596.5M280.4 590.0V596.5M330.7 590.0V596.5M381.9 590.0V596.5" stroke="#cfcfcf" stroke-width="2" fill="none"/>
<text x="216.8" y="202.8" font-size="16.0" fill="#d8d8d8" text-anchor="middle" textLength="90.5" lengthAdjust="spacingAndGlyphs">DeltaE 2000</text>
<rect x="459.7" y="36.5" width="175.8" height="387.6" fill="#232323"/>
<text x="453.4" y="42.5" font-size="16.6" fill="#d8d8d8" text-anchor="end">4</text>
<text x="453.4" y="90.9" font-size="16.6" fill="#d8d8d8" text-anchor="end">3</text>
<text x="453.4" y="139.4" font-size="16.6" fill="#d8d8d8" text-anchor="end">2</text>
<text x="453.4" y="187.9" font-size="16.6" fill="#d8d8d8" text-anchor="end">1</text>
<text x="453.4" y="236.3" font-size="16.6" fill="#d8d8d8" text-anchor="end">0</text>
<text x="453.4" y="284.8" font-size="16.6" fill="#d8d8d8" text-anchor="end">-1</text>
<text x="453.4" y="333.2" font-size="16.6" fill="#d8d8d8" text-anchor="end">-2</text>
<text x="453.4" y="381.7" font-size="16.6" fill="#d8d8d8" text-anchor="end">-3</text>
<text x="453.4" y="430.1" font-size="16.6" fill="#d8d8d8" text-anchor="end">-4</text>
<path d="M459.7 84.9H635.5M459.7 133.4H635.5M459.7 181.9H635.5M459.7 230.3H635.5M459.7 278.8H635.5M459.7 327.2H635.5M459.7 375.7H635.5" stroke="#949494" stroke-width="1.55" fill="none"/>
<path d="M454.2 36.5H459.7M454.2 84.9H459.7M454.2 133.4H459.7M454.2 181.9H459.7M454.2 230.3H459.7M454.2 278.8H459.7M454.2 327.2H459.7M454.2 375.7H459.7M454.2 424.1H459.7" stroke="#cfcfcf" stroke-width="2" fill="none"/>
<rect x="459.7" y="36.5" width="175.8" height="387.6" fill="none" stroke="#a2a2a2" stroke-width="1.75"/>
<rect x="477.1" y="153.4" width="139.8" height="76.9" fill="url(#cy)" stroke="#000" stroke-width="1.2"/>
<text x="537.5" y="29.5" font-size="16.0" fill="#d8d8d8" text-anchor="middle">Delta L</text>
<rect x="686.4" y="36.5" width="176.5" height="387.6" fill="#232323"/>
<text x="680.1" y="42.5" font-size="16.6" fill="#d8d8d8" text-anchor="end">6</text>
<text x="680.1" y="107.1" font-size="16.6" fill="#d8d8d8" text-anchor="end">4</text>
<text x="680.1" y="171.7" font-size="16.6" fill="#d8d8d8" text-anchor="end">2</text>
<text x="680.1" y="236.3" font-size="16.6" fill="#d8d8d8" text-anchor="end">0</text>
<text x="680.1" y="300.9" font-size="16.6" fill="#d8d8d8" text-anchor="end">-2</text>
<text x="680.1" y="365.5" font-size="16.6" fill="#d8d8d8" text-anchor="end">-4</text>
<text x="680.1" y="430.1" font-size="16.6" fill="#d8d8d8" text-anchor="end">-6</text>
<path d="M686.4 101.1H862.9M686.4 165.7H862.9M686.4 230.3H862.9M686.4 294.9H862.9M686.4 359.5H862.9" stroke="#949494" stroke-width="1.55" fill="none"/>
<path d="M680.9 36.5H686.4M680.9 101.1H686.4M680.9 165.7H686.4M680.9 230.3H686.4M680.9 294.9H686.4M680.9 359.5H686.4M680.9 424.1H686.4" stroke="#cfcfcf" stroke-width="2" fill="none"/>
<rect x="686.4" y="36.5" width="176.5" height="387.6" fill="none" stroke="#a2a2a2" stroke-width="1.75"/>
<rect x="703.8" y="95.0" width="140.5" height="135.3" fill="url(#cy)" stroke="#000" stroke-width="1.2"/>
<text x="764.3" y="29.5" font-size="16.0" fill="#d8d8d8" text-anchor="middle">Delta C</text>
<rect x="913.5" y="36.5" width="176.7" height="387.6" fill="#232323"/>
<text x="907.2" y="42.5" font-size="16.6" fill="#d8d8d8" text-anchor="end">4</text>
<text x="907.2" y="90.9" font-size="16.6" fill="#d8d8d8" text-anchor="end">3</text>
<text x="907.2" y="139.4" font-size="16.6" fill="#d8d8d8" text-anchor="end">2</text>
<text x="907.2" y="187.9" font-size="16.6" fill="#d8d8d8" text-anchor="end">1</text>
<text x="907.2" y="236.3" font-size="16.6" fill="#d8d8d8" text-anchor="end">0</text>
<text x="907.2" y="284.8" font-size="16.6" fill="#d8d8d8" text-anchor="end">-1</text>
<text x="907.2" y="333.2" font-size="16.6" fill="#d8d8d8" text-anchor="end">-2</text>
<text x="907.2" y="381.7" font-size="16.6" fill="#d8d8d8" text-anchor="end">-3</text>
<text x="907.2" y="430.1" font-size="16.6" fill="#d8d8d8" text-anchor="end">-4</text>
<path d="M913.5 84.9H1090.2M913.5 133.4H1090.2M913.5 181.9H1090.2M913.5 230.3H1090.2M913.5 278.8H1090.2M913.5 327.2H1090.2M913.5 375.7H1090.2" stroke="#949494" stroke-width="1.55" fill="none"/>
<path d="M908.0 36.5H913.5M908.0 84.9H913.5M908.0 133.4H913.5M908.0 181.9H913.5M908.0 230.3H913.5M908.0 278.8H913.5M908.0 327.2H913.5M908.0 375.7H913.5M908.0 424.1H913.5" stroke="#cfcfcf" stroke-width="2" fill="none"/>
<rect x="913.5" y="36.5" width="176.7" height="387.6" fill="none" stroke="#a2a2a2" stroke-width="1.75"/>
<rect x="930.9" y="230.3" width="140.7" height="42.3" fill="url(#cy)" stroke="#000" stroke-width="1.2"/>
<text x="991.2" y="29.5" font-size="16.0" fill="#d8d8d8" text-anchor="middle">Delta H</text>
<text x="1164.0" y="607.2" font-size="16.6" fill="#d8d8d8" text-anchor="end">0</text>
<text x="1170.8" y="626.0" font-size="16.6" fill="#d8d8d8" text-anchor="middle">0</text>
<text x="1164.0" y="560.1" font-size="16.6" fill="#d8d8d8" text-anchor="end">0.05</text>
<text x="1232.1" y="626.0" font-size="16.6" fill="#d8d8d8" text-anchor="middle">0.05</text>
<text x="1164.0" y="513.0" font-size="16.6" fill="#d8d8d8" text-anchor="end">0.1</text>
<text x="1293.4" y="626.0" font-size="16.6" fill="#d8d8d8" text-anchor="middle">0.1</text>
<text x="1164.0" y="465.9" font-size="16.6" fill="#d8d8d8" text-anchor="end">0.15</text>
<text x="1354.8" y="626.0" font-size="16.6" fill="#d8d8d8" text-anchor="middle">0.15</text>
<text x="1164.0" y="418.7" font-size="16.6" fill="#d8d8d8" text-anchor="end">0.2</text>
<text x="1416.1" y="626.0" font-size="16.6" fill="#d8d8d8" text-anchor="middle">0.2</text>
<text x="1164.0" y="371.6" font-size="16.6" fill="#d8d8d8" text-anchor="end">0.25</text>
<text x="1477.4" y="626.0" font-size="16.6" fill="#d8d8d8" text-anchor="middle">0.25</text>
<text x="1164.0" y="324.5" font-size="16.6" fill="#d8d8d8" text-anchor="end">0.3</text>
<text x="1538.7" y="626.0" font-size="16.6" fill="#d8d8d8" text-anchor="middle">0.3</text>
<text x="1164.0" y="277.4" font-size="16.6" fill="#d8d8d8" text-anchor="end">0.35</text>
<text x="1600.0" y="626.0" font-size="16.6" fill="#d8d8d8" text-anchor="middle">0.35</text>
<text x="1164.0" y="230.3" font-size="16.6" fill="#d8d8d8" text-anchor="end">0.4</text>
<text x="1661.4" y="626.0" font-size="16.6" fill="#d8d8d8" text-anchor="middle">0.4</text>
<text x="1164.0" y="183.2" font-size="16.6" fill="#d8d8d8" text-anchor="end">0.45</text>
<text x="1722.7" y="626.0" font-size="16.6" fill="#d8d8d8" text-anchor="middle">0.45</text>
<text x="1164.0" y="136.1" font-size="16.6" fill="#d8d8d8" text-anchor="end">0.5</text>
<text x="1784.0" y="626.0" font-size="16.6" fill="#d8d8d8" text-anchor="middle">0.5</text>
<text x="1164.0" y="88.9" font-size="16.6" fill="#d8d8d8" text-anchor="end">0.55</text>
<text x="1845.3" y="626.0" font-size="16.6" fill="#d8d8d8" text-anchor="middle">0.55</text>
<path d="M1165 601.2H1171M1171.3 601V607.5M1165 554.1H1171M1232.6 601V607.5M1165 507.0H1171M1293.9 601V607.5M1165 459.9H1171M1355.3 601V607.5M1165 412.7H1171M1416.6 601V607.5M1165 365.6H1171M1477.9 601V607.5M1165 318.5H1171M1539.2 601V607.5M1165 271.4H1171M1600.5 601V607.5M1165 224.3H1171M1661.9 601V607.5M1165 177.2H1171M1723.2 601V607.5M1165 130.1H1171M1784.5 601V607.5M1165 82.9H1171M1845.8 601V607.5" stroke="#d4d4d4" stroke-width="2" fill="none"/>
<text x="1519.5" y="28.8" font-size="16.0" fill="#d8d8d8" text-anchor="middle" textLength="97.0" lengthAdjust="spacingAndGlyphs">CIE 1976 u'v'</text>
<rect x="1344.8" y="89.8" width="14.7" height="14.7" fill="none" stroke="#fff" stroke-opacity=".92" stroke-width="1.5"/>
<rect x="1389.7" y="80.6" width="14.7" height="14.7" fill="none" stroke="#fff" stroke-opacity=".92" stroke-width="1.5"/>
<rect x="1445.1" y="76.0" width="14.7" height="14.7" fill="none" stroke="#fff" stroke-opacity=".92" stroke-width="1.5"/>
<rect x="1481.1" y="84.0" width="14.7" height="14.7" fill="none" stroke="#fff" stroke-opacity=".92" stroke-width="1.5"/>
<rect x="1386.9" y="105.7" width="14.7" height="14.7" fill="none" stroke="#fff" stroke-opacity=".92" stroke-width="1.5"/>
<rect x="1462.2" y="121.0" width="14.7" height="14.7" fill="none" stroke="#fff" stroke-opacity=".92" stroke-width="1.5"/>
<rect x="1449.4" y="129.5" width="14.7" height="14.7" fill="none" stroke="#fff" stroke-opacity=".92" stroke-width="1.5"/>
<rect x="1352.4" y="141.7" width="14.7" height="14.7" fill="none" stroke="#fff" stroke-opacity=".92" stroke-width="1.5"/>
<rect x="1531.0" y="88.7" width="14.7" height="14.7" fill="none" stroke="#fff" stroke-opacity=".92" stroke-width="1.5"/>
<rect x="1552.8" y="137.2" width="14.7" height="14.7" fill="none" stroke="#fff" stroke-opacity=".92" stroke-width="1.5"/>
<rect x="1623.7" y="122.6" width="14.7" height="14.7" fill="none" stroke="#fff" stroke-opacity=".92" stroke-width="1.5"/>
<rect x="1339.7" y="199.3" width="14.7" height="14.7" fill="none" stroke="#fff" stroke-opacity=".92" stroke-width="1.5"/>
<rect x="1379.1" y="196.5" width="14.7" height="14.7" fill="none" stroke="#fff" stroke-opacity=".92" stroke-width="1.5"/>
<rect x="1402.1" y="202.8" width="14.7" height="14.7" fill="none" stroke="#fff" stroke-opacity=".92" stroke-width="1.5"/>
<rect x="1443.2" y="223.2" width="14.7" height="14.7" fill="none" stroke="#fff" stroke-opacity=".92" stroke-width="1.5"/>
<rect x="1514.9" y="190.2" width="14.7" height="14.7" fill="none" stroke="#fff" stroke-opacity=".92" stroke-width="1.5"/>
<rect x="1382.0" y="257.6" width="14.7" height="14.7" fill="none" stroke="#fff" stroke-opacity=".92" stroke-width="1.5"/>
<rect x="1382.0" y="315.5" width="14.7" height="14.7" fill="none" stroke="#fff" stroke-opacity=".92" stroke-width="1.5"/>
<circle cx="1339.4" cy="84.9" r="4.7" fill="#4b964e" stroke="#141414" stroke-opacity=".9" stroke-width="1.35"/>
<circle cx="1392.7" cy="77.2" r="4.7" fill="#a0b946" stroke="#141414" stroke-opacity=".9" stroke-width="1.35"/>
<circle cx="1455.1" cy="78.5" r="4.7" fill="#ebc82d" stroke="#141414" stroke-opacity=".9" stroke-width="1.35"/>
<circle cx="1499.0" cy="84.9" r="4.7" fill="#e4a537" stroke="#141414" stroke-opacity=".9" stroke-width="1.35"/>
<circle cx="1392.7" cy="110.1" r="4.7" fill="#586c46" stroke="#141414" stroke-opacity=".9" stroke-width="1.35"/>
<circle cx="1470.7" cy="130.4" r="4.7" fill="#735245" stroke="#141414" stroke-opacity=".9" stroke-width="1.35"/>
<circle cx="1453.7" cy="138.4" r="4.7" fill="#c69a88" stroke="#141414" stroke-opacity=".9" stroke-width="1.35"/>
<circle cx="1351.8" cy="147.4" r="4.7" fill="#69beac" stroke="#141414" stroke-opacity=".9" stroke-width="1.35"/>
<circle cx="1555.8" cy="92.5" r="4.7" fill="#d78032" stroke="#141414" stroke-opacity=".9" stroke-width="1.35"/>
<circle cx="1569.4" cy="142.4" r="4.7" fill="#c35864" stroke="#141414" stroke-opacity=".9" stroke-width="1.35"/>
<circle cx="1645.1" cy="127.0" r="4.7" fill="#b2343e" stroke="#141414" stroke-opacity=".9" stroke-width="1.35"/>
<circle cx="1339.4" cy="211.4" r="4.7" fill="#008c9e" stroke="#141414" stroke-opacity=".9" stroke-width="1.35"/>
<circle cx="1378.8" cy="216.2" r="4.7" fill="#5f7da5" stroke="#141414" stroke-opacity=".9" stroke-width="1.35"/>
<circle cx="1409.7" cy="222.6" r="4.7" fill="#8782b2" stroke="#141414" stroke-opacity=".9" stroke-width="1.35"/>
<circle cx="1453.9" cy="241.2" r="4.7" fill="#5f3c6e" stroke="#141414" stroke-opacity=".9" stroke-width="1.35"/>
<circle cx="1535.4" cy="205.1" r="4.7" fill="#be5696" stroke="#141414" stroke-opacity=".9" stroke-width="1.35"/>
<circle cx="1383.1" cy="306.9" r="4.7" fill="#505da8" stroke="#141414" stroke-opacity=".9" stroke-width="1.35"/>
<circle cx="1386.4" cy="348.8" r="4.7" fill="#383e96" stroke="#141414" stroke-opacity=".9" stroke-width="1.35"/>
<rect x="1405.1" y="150.1" width="14.8" height="15.3" fill="none" stroke="#000" stroke-width="2.1"/>
<circle cx="1411.6" cy="158.6" r="4.3" fill="#8a8a8a" stroke="#141414" stroke-width="1.3"/>
<circle cx="1412.4" cy="158.4" r="4.3" fill="#a5a5a5" stroke="#141414" stroke-width="1.3"/>
<circle cx="1413.2" cy="158.5" r="4.3" fill="#a2a2a2" stroke="#141414" stroke-width="1.3"/>
<circle cx="1513" cy="291.5" r="5.2" fill="#000"/>
<rect x="1777.6" y="469.7" width="14.4" height="14.4" fill="none" stroke="#fff" stroke-width="1.6"/>
<ellipse cx="1741" cy="490.7" rx="4.4" ry="5.1" fill="#008a9c" stroke="#081418" stroke-width="1.3"/>
<clipPath id="ic"><rect x="1673.2" y="404.1" width="227.4" height="148.3"/></clipPath>
<ellipse clip-path="url(#ic)" cx="1902.6" cy="534.3" rx="4.4" ry="5.1" fill="#5f7fa8" stroke="#081418" stroke-width="1.3"/></svg>
<svg class="a" style="left:1535px;top:1040px" width="385" height="93" viewBox="1535 1040 385 93"><g fill="none" stroke-linejoin="miter" stroke-linecap="butt"><path d="M1548.6 1101.5L1547.2 1055.6L1595.2 1064.8L1596.8 1090.6L1559 1096.5M1548.5 1101L1579 1116L1633 1099.4L1602 1093.2" stroke="#fff" stroke-opacity=".3" stroke-width="7.6"/><path d="M1552.6 1061L1555 1098.7L1579 1111.6L1612 1101" stroke="#5c4860" stroke-opacity=".8" stroke-width="2.6"/><path d="M1548.6 1101.5L1547.2 1055.6L1595.2 1064.8L1596.8 1090.6L1559 1096.5" stroke="#7e2228" stroke-opacity=".88" stroke-width="5.2"/><path d="M1548.5 1101L1579 1116L1633 1099.4L1602 1093.2" stroke="#7e2228" stroke-opacity=".88" stroke-width="4.6"/></g><path d="M1560.2 1070.7L1564.9 1067.3L1575.6 1082.8L1601.6 1051.3L1603.6 1053L1576 1090.2Z" fill="#262626" fill-opacity=".92" stroke="#fff" stroke-opacity=".45" stroke-width="1.5"/><text x="1603.4" y="1089.8" font-size="32.6" font-weight="bold" textLength="193.2" lengthAdjust="spacingAndGlyphs" fill="none" stroke="#fff" stroke-opacity=".5" stroke-width="4.6">NOTEBOOK</text><g opacity=".74"><text x="1603.4" y="1089.8" font-size="32.6" font-weight="bold" textLength="193.2" lengthAdjust="spacingAndGlyphs" fill="#962c34" stroke="#962c34" stroke-width="1.2">NOTEBOOK</text></g><text x="1798.0" y="1089.8" font-size="32.6" font-weight="bold" textLength="111.7" lengthAdjust="spacingAndGlyphs" fill="none" stroke="#fff" stroke-opacity=".5" stroke-width="4.6">CHECK</text><g opacity=".86"><text x="1798.0" y="1089.8" font-size="32.6" font-weight="bold" textLength="111.7" lengthAdjust="spacingAndGlyphs" fill="#2b2b2b" stroke="#2b2b2b" stroke-width="1.2">CHECK</text></g></svg>
</div></body></html>
